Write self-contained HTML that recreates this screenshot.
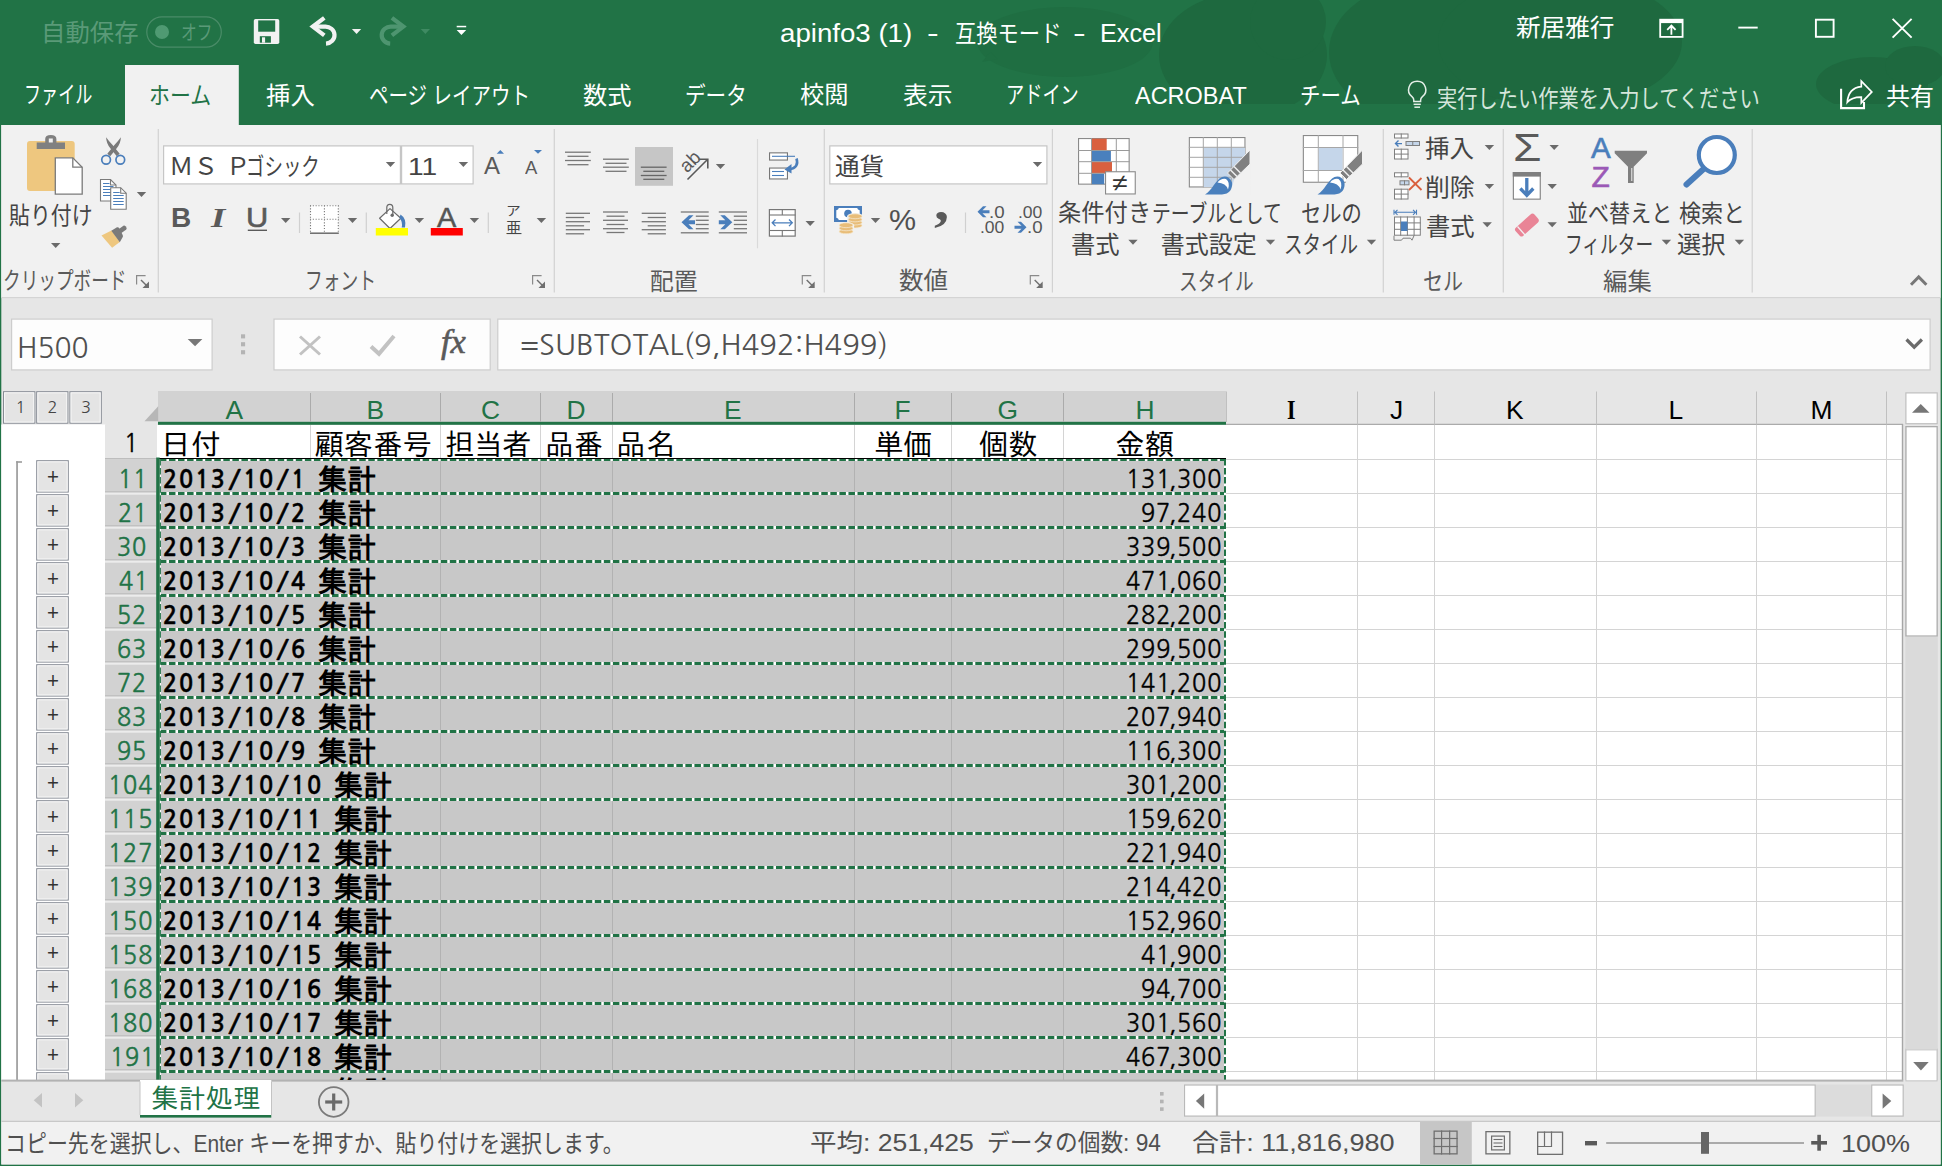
<!DOCTYPE html>
<html lang="ja"><head><meta charset="utf-8"><title>apinfo3 (1) - 互換モード - Excel</title>
<style>
html,body{margin:0;padding:0;background:#e6e6e6;}
#app{position:relative;width:1942px;height:1166px;overflow:hidden;background:#e6e6e6;font-family:'Liberation Sans','Noto Sans CJK JP',sans-serif;}
.t{position:absolute;white-space:pre;line-height:1;transform-origin:0 0;}
#g{position:absolute;left:0;top:0;}
</style></head><body>
<div id="app">
<svg id="g" width="1942" height="1166" viewBox="0 0 1942 1166">
<rect x="0" y="0" width="1942" height="125" fill="#217346" />
<clipPath id="cp"><rect x="0" y="0" width="1942" height="104"/></clipPath>
<g clip-path="url(#cp)">
<g fill="#1f6e42">
<ellipse cx="1065" cy="42" rx="88" ry="35"/><path d="M990 52l-8 10 16-3z"/>
</g>
<g fill="#1e693f">
<ellipse cx="1243" cy="55" rx="84" ry="62"/><circle cx="1288" cy="22" r="38"/><ellipse cx="1425" cy="52" rx="96" ry="70"/><ellipse cx="1560" cy="42" rx="122" ry="66"/><ellipse cx="1872" cy="84" rx="56" ry="27"/><ellipse cx="1915" cy="66" rx="30" ry="20"/>
</g>
</g>
<rect x="0" y="125" width="1.3" height="1041" fill="#217346" />
<rect x="1940.6" y="125" width="1.4" height="1041" fill="#217346" />
<rect x="0" y="1164.4" width="1942" height="1.6" fill="#217346" />
<rect x="146.8" y="16.8" width="74.5" height="30.4" rx="15.2" fill="none" stroke="#4a8c68" stroke-width="1.2"/>
<circle cx="162" cy="32" r="7" fill="#4f9a72"/>
<rect x="253.800" y="18.900" width="25.500" height="25.200" rx="1.800" fill="#f2f2f2"/>
<rect x="258.2" y="20.4" width="17" height="11.3" fill="#217346" />
<rect x="259.8" y="36.2" width="11.1" height="6.5" fill="#217346" />
<rect x="262" y="37.3" width="3.1" height="5.4" fill="#f2f2f2" />
<path d="M324.300 17.800L312.800 26.600L324.300 35.400" fill="none" stroke="#f2f2f2" stroke-width="4.2" stroke-linejoin="miter" stroke-miterlimit="8"/>
<path d="M313.500 26.600H325A9 8.500 0 0 1 326 43.600" fill="none" stroke="#f2f2f2" stroke-width="4.2" />
<path d="M351.9 29h9.3l-4.65 5z" fill="#f2f2f2"  />
<path d="M391.900 17.800L403.400 26.600L391.900 35.400" fill="none" stroke="#4e9570" stroke-width="4.2" stroke-linejoin="miter" stroke-miterlimit="8"/>
<path d="M402.700 26.600H391.200A9 8.500 0 0 0 390.200 43.600" fill="none" stroke="#4e9570" stroke-width="4.2" />
<path d="M420.7 29h9.3l-4.65 5z" fill="#3f8a62"  />
<rect x="456.7" y="25.8" width="9.5" height="1.5" fill="#fff" />
<path d="M456.7 30h9.5l-4.75 5z" fill="#fff"  />
<rect x="1660.200" y="19.700" width="22.400" height="17.200" fill="none" stroke="#fff" stroke-width="1.800"/>
<rect x="1660" y="19.5" width="22.8" height="3.6" fill="#fff" />
<path d="M1671.400 34.800v-8.800 M1667.200 29.800l4.200-4.200 4.200 4.200" fill="none" stroke="#fff" stroke-width="1.8" />
<line x1="1738.3" y1="27.6" x2="1757.7" y2="27.6" stroke="#fff" stroke-width="1.9" />
<rect x="1815.900" y="19.700" width="17.700" height="17.100" fill="none" stroke="#fff" stroke-width="1.900"/>
<path d="M1892.600 18.900l19 18.700 M1911.600 18.900l-19 18.700" fill="none" stroke="#fff" stroke-width="1.9" />
<rect x="125" y="65" width="113.8" height="60" fill="#f1f1f1" />
<path d="M1417.2 81.3a8.6 8.6 0 0 0 -5 15.6c1 .8 1.6 2 1.6 3.4v1.2h6.8v-1.2c0-1.4.6-2.6 1.6-3.4a8.6 8.6 0 0 0 -5-15.6z" fill="none" stroke="#e4efe8" stroke-width="1.5" />
<line x1="1413.6" y1="104.3" x2="1420.8" y2="104.3" stroke="#e4efe8" stroke-width="1.5" />
<line x1="1414.4" y1="107.2" x2="1420" y2="107.2" stroke="#e4efe8" stroke-width="1.5" />
<path d="M1847.300 102.300C1848 93 1853 87.500 1861.300 86.700L1861.300 81.200L1871.800 91.900L1861.300 102.900L1861.300 97.100C1855 97 1850.500 98.500 1847.300 102.300Z" fill="none" stroke="#fff" stroke-width="1.7" stroke-linejoin="miter"/>
<path d="M1841.100 88.700V108.100H1864V102" fill="none" stroke="#fff" stroke-width="2.1" />
<rect x="1.3" y="125" width="1939.3" height="172.5" fill="#f1f1f1" />
<rect x="1.3" y="297" width="1939.3" height="1.2" fill="#d4d4d4" />
<line x1="158.3" y1="129" x2="158.3" y2="292.5" stroke="#d2d2d2" stroke-width="1.2" />
<line x1="554.3" y1="129" x2="554.3" y2="292.5" stroke="#d2d2d2" stroke-width="1.2" />
<line x1="824.3" y1="129" x2="824.3" y2="292.5" stroke="#d2d2d2" stroke-width="1.2" />
<line x1="1052.4" y1="129" x2="1052.4" y2="292.5" stroke="#d2d2d2" stroke-width="1.2" />
<line x1="1383.3" y1="129" x2="1383.3" y2="292.5" stroke="#d2d2d2" stroke-width="1.2" />
<line x1="1503.3" y1="129" x2="1503.3" y2="292.5" stroke="#d2d2d2" stroke-width="1.2" />
<line x1="1752.2" y1="129" x2="1752.2" y2="292.5" stroke="#d2d2d2" stroke-width="1.2" />
<rect x="27" y="141" width="47.7" height="50" rx="3" fill="#eec77f"/>
<path d="M36.7 149v-6.5h8.5v-3.5q0-4 5.6-4t5.600 4v3.5h8.600v6.500z" fill="#808080"  />
<rect x="48.8" y="138.5" width="4" height="4" fill="#f1f1f1" />
<path d="M55.3 157.8h17.500l9.400 9.400v27h-26.900z" fill="#fff" stroke="#7a7a7a" stroke-width="1.3" />
<path d="M72.800 157.800v9.400h9.400" fill="none" stroke="#7a7a7a" stroke-width="1.3" />
<path d="M51 243h9.4l-4.7 5z" fill="#6a6a6a"  />
<path d="M106.100 137.300Q106.300 143.500 110.300 148.300L116.800 156.200L119.700 153.800L112.800 145.300Q108.300 140.500 106.100 137.300z" fill="#7a7a7a"  />
<path d="M120.900 137.300Q120.700 143.500 116.700 148.300L110.200 156.200L107.300 153.800L114.200 145.300Q118.700 140.500 120.900 137.300z" fill="#7a7a7a"  />
<circle cx="106.100" cy="159.800" r="4.350" fill="none" stroke="#4a7ebb" stroke-width="1.700"/><circle cx="120.300" cy="159.800" r="4.350" fill="none" stroke="#4a7ebb" stroke-width="1.700"/>
<path d="M100.5 179.5h10l5.500 5.500v16h-15.500z" fill="#fff" stroke="#7a7a7a" stroke-width="1.1" />
<path d="M110.5 179.5v5.500h5.500" fill="none" stroke="#7a7a7a" stroke-width="1.1" />
<line x1="103.0" y1="183.5" x2="109.5" y2="183.5" stroke="#4a7ebb" stroke-width="1.0" />
<line x1="103.0" y1="186.5" x2="113.5" y2="186.5" stroke="#4a7ebb" stroke-width="1.0" />
<line x1="103.0" y1="189.5" x2="113.5" y2="189.5" stroke="#4a7ebb" stroke-width="1.0" />
<line x1="103.0" y1="192.5" x2="113.5" y2="192.5" stroke="#4a7ebb" stroke-width="1.0" />
<line x1="103.0" y1="195.5" x2="113.5" y2="195.5" stroke="#4a7ebb" stroke-width="1.0" />
<path d="M110.7 187.7h10l5.500 5.500v16h-15.500z" fill="#fff" stroke="#7a7a7a" stroke-width="1.1" />
<path d="M120.7 187.7v5.500h5.500" fill="none" stroke="#7a7a7a" stroke-width="1.1" />
<line x1="113.2" y1="192.5" x2="119.7" y2="192.5" stroke="#4a7ebb" stroke-width="1.0" />
<line x1="113.2" y1="195.5" x2="123.7" y2="195.5" stroke="#4a7ebb" stroke-width="1.0" />
<line x1="113.2" y1="198.5" x2="123.7" y2="198.5" stroke="#4a7ebb" stroke-width="1.0" />
<line x1="113.2" y1="201.5" x2="123.7" y2="201.5" stroke="#4a7ebb" stroke-width="1.0" />
<line x1="113.2" y1="204.5" x2="123.7" y2="204.5" stroke="#4a7ebb" stroke-width="1.0" />
<path d="M136.8 192h9.4l-4.7 5z" fill="#6a6a6a"  />
<path d="M101.500 235.500L111.500 230.600L119.800 242.100L112.100 247.800z" fill="#eec77f"  />
<path d="M111.300 230.800L117 227.300Q118.300 226.800 119.300 228.300L122.800 235.300Q123.300 236.800 122.300 237.800L119.800 242.300z" fill="#7a7a7a"  />
<path d="M118.300 229.600L123.400 225.700Q124.600 225.200 125.500 226.300L126.500 227.700Q127 228.900 126 229.800L121 233.300z" fill="#7a7a7a"  />
<path d="M136.6 284.6v-9h9" fill="none" stroke="#8a8a8a" stroke-width="1.2" />
<path d="M141 280l6.5 6.5" fill="none" stroke="#6f6f6f" stroke-width="1.4" />
<path d="M149 288v-6.5l-6.5 6.5z" fill="#6f6f6f"  />
<rect x="163.6" y="145.9" width="236.8" height="38.0" fill="#fff" stroke="#c6c6c6" stroke-width="1.2" />
<rect x="401.6" y="145.9" width="71.5" height="38.0" fill="#fff" stroke="#c6c6c6" stroke-width="1.2" />
<path d="M385.8 162h9.4l-4.7 5z" fill="#6a6a6a"  />
<path d="M458.7 162h9.4l-4.7 5z" fill="#6a6a6a"  />
<path d="M496.700 153.800l3.650-3.800 3.650 3.800z" fill="#4a7ebb"  />
<path d="M534 150h8l-4 3.800z" fill="#4a7ebb"  />
<line x1="247.8" y1="230.3" x2="267" y2="230.3" stroke="#5a5a5a" stroke-width="1.4" />
<path d="M281 218h9.4l-4.7 5z" fill="#6a6a6a"  />
<line x1="299.5" y1="212.5" x2="299.5" y2="233" stroke="#d0d0d0" stroke-width="1.2" />
<rect x="310.5" y="205.5" width="28" height="27.5" fill="#fff" />
<line x1="310" y1="205.7" x2="338.8" y2="205.7" stroke="#7a7a7a" stroke-width="1.1" stroke-dasharray="1.1 1.7"/>
<line x1="310" y1="219.3" x2="338.8" y2="219.3" stroke="#7a7a7a" stroke-width="1.1" stroke-dasharray="1.1 1.7"/>
<line x1="310.5" y1="205.5" x2="310.5" y2="233" stroke="#7a7a7a" stroke-width="1.1" stroke-dasharray="1.1 1.7"/>
<line x1="324.4" y1="205.5" x2="324.4" y2="233" stroke="#7a7a7a" stroke-width="1.1" stroke-dasharray="1.1 1.7"/>
<line x1="338.3" y1="205.5" x2="338.3" y2="233" stroke="#7a7a7a" stroke-width="1.1" stroke-dasharray="1.1 1.7"/>
<line x1="310" y1="233.2" x2="338.8" y2="233.2" stroke="#6a6a6a" stroke-width="1.5" />
<path d="M347.8 218h9.4l-4.7 5z" fill="#6a6a6a"  />
<line x1="366.3" y1="212.5" x2="366.3" y2="233" stroke="#d0d0d0" stroke-width="1.2" />
<path d="M379.600 218.300L390 208.600L400.800 218.300L390 228.500z" fill="#fff" stroke="#6a6a6a" stroke-width="1.2" stroke-linejoin="round"/>
<path d="M386.800 214v-6.500a3 3.200 0 0 1 6 0v7" fill="none" stroke="#6a6a6a" stroke-width="1.2" />
<circle cx="392.200" cy="215.300" r="1.700" fill="#6a6a6a"/>
<path d="M400.500 214.500q6.300 4 4.500 13h-3.300q1.300-5.500-2.200-9.800z" fill="#4a7ebb"  />
<rect x="375.8" y="228" width="32.2" height="7.5" fill="#ffff00" />
<path d="M414.7 218h9.4l-4.7 5z" fill="#6a6a6a"  />
<rect x="430.8" y="228" width="32" height="7.5" fill="#ff0000" />
<path d="M469.7 218h9.4l-4.7 5z" fill="#6a6a6a"  />
<line x1="488.3" y1="212.5" x2="488.3" y2="233" stroke="#d0d0d0" stroke-width="1.2" />
<line x1="506.7" y1="233.6" x2="521.5" y2="233.6" stroke="#555" stroke-width="1" />
<path d="M536.7 218h9.4l-4.7 5z" fill="#6a6a6a"  />
<path d="M532.6 284.6v-9h9" fill="none" stroke="#8a8a8a" stroke-width="1.2" />
<path d="M537 280l6.5 6.5" fill="none" stroke="#6f6f6f" stroke-width="1.4" />
<path d="M545 288v-6.5l-6.5 6.5z" fill="#6f6f6f"  />
<line x1="565" y1="152.2" x2="590.8" y2="152.2" stroke="#777" stroke-width="1.3" />
<line x1="567.5" y1="156.3" x2="588.5" y2="156.3" stroke="#777" stroke-width="1.3" />
<line x1="565" y1="160.5" x2="590.8" y2="160.5" stroke="#777" stroke-width="1.3" />
<line x1="567.5" y1="164.7" x2="588.5" y2="164.7" stroke="#777" stroke-width="1.3" />
<line x1="603" y1="159.2" x2="628.8" y2="159.2" stroke="#777" stroke-width="1.3" />
<line x1="605.5" y1="163.3" x2="626.5" y2="163.3" stroke="#777" stroke-width="1.3" />
<line x1="603" y1="167.2" x2="628.8" y2="167.2" stroke="#777" stroke-width="1.3" />
<line x1="605.5" y1="171.3" x2="626.5" y2="171.3" stroke="#777" stroke-width="1.3" />
<rect x="635" y="147" width="38" height="38.8" fill="#c6c6c6" />
<line x1="640.8" y1="167.2" x2="666.5999999999999" y2="167.2" stroke="#666" stroke-width="1.3" />
<line x1="643.3" y1="171.3" x2="664.3" y2="171.3" stroke="#666" stroke-width="1.3" />
<line x1="640.8" y1="175.5" x2="666.5999999999999" y2="175.5" stroke="#666" stroke-width="1.3" />
<line x1="643.3" y1="179.3" x2="664.3" y2="179.3" stroke="#666" stroke-width="1.3" />
<text x="0" y="0" transform="translate(687 173.500) rotate(-45)" font-family="Liberation Sans, sans-serif" font-size="19" fill="#5a5a5a">ab</text>
<path d="M687.500 179.500l20-20 M698.500 159.300h9.300v9.300" fill="none" stroke="#5a5a5a" stroke-width="1.6" />
<path d="M715.8 164h9.4l-4.7 5z" fill="#6a6a6a"  />
<line x1="757.5" y1="139" x2="757.5" y2="248.3" stroke="#dadada" stroke-width="1.2" />
<rect x="769.55" y="152.85000000000002" width="17.9" height="7.200000000000001" fill="#fff" stroke="#777" stroke-width="1.1" />
<rect x="769.55" y="168.05" width="17.9" height="10.9" fill="#fff" stroke="#777" stroke-width="1.1" />
<line x1="772" y1="156.3" x2="795" y2="156.3" stroke="#4a7ebb" stroke-width="1.1" />
<line x1="772" y1="171.5" x2="784" y2="171.5" stroke="#4a7ebb" stroke-width="1.1" />
<line x1="772" y1="175.5" x2="784" y2="175.5" stroke="#4a7ebb" stroke-width="1.1" />
<path d="M796.500 158.500q3 9-7.500 11" fill="none" stroke="#4a7ebb" stroke-width="2.6" />
<path d="M784.500 169.500l7-5.500v9.500z" fill="#4a7ebb"  />
<line x1="565.8" y1="213.3" x2="590.0" y2="213.3" stroke="#777" stroke-width="1.3" />
<line x1="565.8" y1="217.5" x2="584.0999999999999" y2="217.5" stroke="#777" stroke-width="1.3" />
<line x1="565.8" y1="221.7" x2="590.0" y2="221.7" stroke="#777" stroke-width="1.3" />
<line x1="565.8" y1="225.8" x2="584.0999999999999" y2="225.8" stroke="#777" stroke-width="1.3" />
<line x1="565.8" y1="229.7" x2="590.0" y2="229.7" stroke="#777" stroke-width="1.3" />
<line x1="565.8" y1="233.8" x2="584.0999999999999" y2="233.8" stroke="#777" stroke-width="1.3" />
<line x1="603" y1="212" x2="628" y2="212" stroke="#777" stroke-width="1.3" />
<line x1="606.5" y1="216.2" x2="624.5" y2="216.2" stroke="#777" stroke-width="1.3" />
<line x1="603" y1="220.3" x2="628" y2="220.3" stroke="#777" stroke-width="1.3" />
<line x1="606.5" y1="224.5" x2="624.5" y2="224.5" stroke="#777" stroke-width="1.3" />
<line x1="603" y1="228.7" x2="628" y2="228.7" stroke="#777" stroke-width="1.3" />
<line x1="606.5" y1="232.5" x2="624.5" y2="232.5" stroke="#777" stroke-width="1.3" />
<line x1="641.7" y1="213.3" x2="665.9000000000001" y2="213.3" stroke="#777" stroke-width="1.3" />
<line x1="647.7" y1="217.5" x2="665.9000000000001" y2="217.5" stroke="#777" stroke-width="1.3" />
<line x1="641.7" y1="221.7" x2="665.9000000000001" y2="221.7" stroke="#777" stroke-width="1.3" />
<line x1="647.7" y1="225.8" x2="665.9000000000001" y2="225.8" stroke="#777" stroke-width="1.3" />
<line x1="641.7" y1="229.7" x2="665.9000000000001" y2="229.7" stroke="#777" stroke-width="1.3" />
<line x1="647.7" y1="233.8" x2="665.9000000000001" y2="233.8" stroke="#777" stroke-width="1.3" />
<line x1="680.8" y1="212" x2="708.6999999999999" y2="212" stroke="#777" stroke-width="1.3" />
<line x1="680.8" y1="232.8" x2="708.6999999999999" y2="232.8" stroke="#777" stroke-width="1.3" />
<line x1="695.8" y1="216.2" x2="708.6999999999999" y2="216.2" stroke="#777" stroke-width="1.3" />
<line x1="695.8" y1="220.3" x2="708.6999999999999" y2="220.3" stroke="#777" stroke-width="1.3" />
<line x1="695.8" y1="224.5" x2="708.6999999999999" y2="224.5" stroke="#777" stroke-width="1.3" />
<line x1="695.8" y1="228.7" x2="708.6999999999999" y2="228.7" stroke="#777" stroke-width="1.3" />
<path d="M681.500 222.200l7.500-7h4.500l-5 5h6.500v4h-6.500l5 5h-4.500z" fill="#4a7ebb"  />
<line x1="718.8" y1="212" x2="747.0" y2="212" stroke="#777" stroke-width="1.3" />
<line x1="718.8" y1="232.8" x2="747.0" y2="232.8" stroke="#777" stroke-width="1.3" />
<line x1="733.8" y1="216.2" x2="747.0" y2="216.2" stroke="#777" stroke-width="1.3" />
<line x1="733.8" y1="220.3" x2="747.0" y2="220.3" stroke="#777" stroke-width="1.3" />
<line x1="733.8" y1="224.5" x2="747.0" y2="224.5" stroke="#777" stroke-width="1.3" />
<line x1="733.8" y1="228.7" x2="747.0" y2="228.7" stroke="#777" stroke-width="1.3" />
<path d="M732.300 222.200l-7.500-7h-4.500l5 5h-6.500v4h6.500l-5 5h4.500z" fill="#4a7ebb"  />
<rect x="769.4" y="209.6" width="25.8" height="26.5" fill="#fff" stroke="#777" stroke-width="1.2" />
<line x1="769" y1="215" x2="795.5" y2="215" stroke="#777" stroke-width="1.1" />
<line x1="769" y1="230.5" x2="795.5" y2="230.5" stroke="#777" stroke-width="1.1" />
<line x1="782.3" y1="209.5" x2="782.3" y2="215" stroke="#777" stroke-width="1.1" />
<line x1="782.3" y1="230.5" x2="782.3" y2="236.5" stroke="#777" stroke-width="1.1" />
<path d="M772.500 222.800h19.500 M775.500 219.500l-3.300 3.300 3.300 3.300 M789 219.500l3.300 3.300-3.300 3.300" fill="none" stroke="#4a7ebb" stroke-width="1.3" />
<path d="M805.5 221h9.4l-4.7 5z" fill="#6a6a6a"  />
<path d="M802.3000000000001 284.6v-9h9" fill="none" stroke="#8a8a8a" stroke-width="1.2" />
<path d="M806.7 280l6.5 6.5" fill="none" stroke="#6f6f6f" stroke-width="1.4" />
<path d="M814.7 288v-6.5l-6.5 6.5z" fill="#6f6f6f"  />
<rect x="829.8000000000001" y="145.9" width="217.10000000000002" height="38.0" fill="#fff" stroke="#c6c6c6" stroke-width="1.2" />
<path d="M1032.8 162h9.4l-4.7 5z" fill="#6a6a6a"  />
<rect x="834" y="206" width="28" height="16" fill="#4a7ebb" />
<path d="M836.300 210.300q2.200-.3 2.500-2.300h18.400q.3 2 2.500 2.300v7.400q-2.200.3-2.500 2.300h-18.400q-.3-2-2.500-2.300z" fill="#fff"  />
<circle cx="848" cy="213.600" r="3.800" fill="#4a7ebb"/>
<ellipse cx="855.1" cy="216.3" rx="8" ry="3.200" fill="#f1f1f1"/>
<rect x="847.1" y="216.3" width="16" height="10.3" fill="#f1f1f1"/>
<ellipse cx="855.1" cy="225.60000000000002" rx="7" ry="2.450" fill="#e8bd79" stroke="#f6ecd8" stroke-width="0.700"/>
<ellipse cx="855.1" cy="222.5" rx="7" ry="2.450" fill="#e8bd79" stroke="#f6ecd8" stroke-width="0.700"/>
<ellipse cx="855.1" cy="219.4" rx="7" ry="2.450" fill="#e8bd79" stroke="#f6ecd8" stroke-width="0.700"/>
<ellipse cx="855.1" cy="216.3" rx="7" ry="2.450" fill="#e8bd79" stroke="#f6ecd8" stroke-width="0.700"/>
<ellipse cx="846.1" cy="225.2" rx="8" ry="3.200" fill="#f1f1f1"/>
<rect x="838.1" y="225.2" width="16" height="7.2" fill="#f1f1f1"/>
<ellipse cx="846.1" cy="231.39999999999998" rx="7" ry="2.450" fill="#e8bd79" stroke="#f6ecd8" stroke-width="0.700"/>
<ellipse cx="846.1" cy="228.29999999999998" rx="7" ry="2.450" fill="#e8bd79" stroke="#f6ecd8" stroke-width="0.700"/>
<ellipse cx="846.1" cy="225.2" rx="7" ry="2.450" fill="#e8bd79" stroke="#f6ecd8" stroke-width="0.700"/>
<path d="M870.8 218h9.4l-4.7 5z" fill="#6a6a6a"  />
<line x1="965.5" y1="212.5" x2="965.5" y2="233" stroke="#d0d0d0" stroke-width="1.2" />
<path d="M977.500 211.800l5.500-5.500h3.500l-4 4h7v3h-7l4 4h-3.500z" fill="#4a7ebb"  />
<path d="M1026.500 227.300l-5.500-5.500h-3.500l4 4h-7v3h7l-4 4h3.500z" fill="#4a7ebb"  />
<path d="M1030.3 284.6v-9h9" fill="none" stroke="#8a8a8a" stroke-width="1.2" />
<path d="M1034.7 280l6.5 6.5" fill="none" stroke="#6f6f6f" stroke-width="1.4" />
<path d="M1042.7 288v-6.5l-6.5 6.5z" fill="#6f6f6f"  />
<rect x="1078.55" y="138.55" width="50.6" height="45.6" fill="#fff" stroke="#8a8a8a" stroke-width="1.1" />
<rect x="1091.7" y="138.6" width="15" height="11.8" fill="#d9603f" />
<rect x="1091.7" y="150.8" width="19.2" height="10.8" fill="#4a80bd" />
<rect x="1091.7" y="162" width="20.3" height="11.2" fill="#d9603f" />
<rect x="1091.7" y="173.5" width="12.5" height="10.7" fill="#4a80bd" />
<line x1="1091.5" y1="138" x2="1091.5" y2="184.7" stroke="#9a9a9a" stroke-width="1" />
<line x1="1116.3" y1="138" x2="1116.3" y2="184.7" stroke="#9a9a9a" stroke-width="1" />
<line x1="1078" y1="150.5" x2="1129.7" y2="150.5" stroke="#9a9a9a" stroke-width="1" />
<line x1="1078" y1="161.7" x2="1129.7" y2="161.7" stroke="#9a9a9a" stroke-width="1" />
<line x1="1078" y1="173.3" x2="1129.7" y2="173.3" stroke="#9a9a9a" stroke-width="1" />
<rect x="1105.55" y="171.75" width="29.7" height="22.2" fill="#fff" stroke="#8a8a8a" stroke-width="1.1" />
<path d="M1128.3 239.8h9.4l-4.7 5z" fill="#6a6a6a"  />
<rect x="1189.35" y="137.55" width="55.6" height="49.4" fill="#fff" stroke="#8a8a8a" stroke-width="1.1" />
<rect x="1203.5" y="147.5" width="41.5" height="39.5" fill="#c5d6ea" />
<line x1="1203.3" y1="137" x2="1203.3" y2="187.5" stroke="#a6a6a6" stroke-width="1" />
<line x1="1217.3" y1="137" x2="1217.3" y2="187.5" stroke="#a6a6a6" stroke-width="1" />
<line x1="1231.3" y1="137" x2="1231.3" y2="187.5" stroke="#a6a6a6" stroke-width="1" />
<line x1="1188.8" y1="147.3" x2="1245.5" y2="147.3" stroke="#a6a6a6" stroke-width="1" />
<line x1="1188.8" y1="157.3" x2="1245.5" y2="157.3" stroke="#a6a6a6" stroke-width="1" />
<line x1="1188.8" y1="167.3" x2="1245.5" y2="167.3" stroke="#a6a6a6" stroke-width="1" />
<line x1="1188.8" y1="177.3" x2="1245.5" y2="177.3" stroke="#a6a6a6" stroke-width="1" />
<path d="M1250.6 163.5L1250.6 195.5L1222.0 195.5L1232.5 185.5L1234.0 179.5Z" fill="#f1f1f1"  />
<path d="M1227.5 173.0L1250.0 150.0L1250.0 164.0L1234.0 179.5Z" fill="#808080" stroke="#f1f1f1" stroke-width="1" />
<path d="M1230.5 170.0L1237.0 176.5" fill="none" stroke="#f1f1f1" stroke-width="1.4" />
<path d="M1234.0 166.5L1240.5 173.0" fill="none" stroke="#f1f1f1" stroke-width="1.4" />
<path d="M1205.0 194.5C1212.0 190.5 1215.0 180.5 1222.0 177.0Q1229.0 175.0 1232.0 182.5Q1233.0 193.5 1222.0 194.5Z" fill="#4a80bd"  />
<path d="M1217.5 182.5Q1221.0 178.0 1226.0 179.0Q1230.5 182.5 1228.0 189.5Q1226.0 183.0 1217.5 182.5Z" fill="#fff"  />
<path d="M1265.8 239.8h9.4l-4.7 5z" fill="#6a6a6a"  />
<rect x="1303.35" y="135.55" width="54.4" height="46.699999999999996" fill="#fff" stroke="#8a8a8a" stroke-width="1.1" />
<line x1="1318.3" y1="135" x2="1318.3" y2="182.8" stroke="#a6a6a6" stroke-width="1" />
<line x1="1343" y1="135" x2="1343" y2="182.8" stroke="#a6a6a6" stroke-width="1" />
<line x1="1302.8" y1="147.5" x2="1358.3" y2="147.5" stroke="#a6a6a6" stroke-width="1" />
<line x1="1302.8" y1="170.5" x2="1358.3" y2="170.5" stroke="#a6a6a6" stroke-width="1" />
<rect x="1318.8" y="148" width="23.7" height="22" fill="#c5d6ea" />
<path d="M1363.1 163.5L1363.1 195.5L1334.5 195.5L1345.0 185.5L1346.5 179.5Z" fill="#f1f1f1"  />
<path d="M1340.0 173.0L1362.5 150.0L1362.5 164.0L1346.5 179.5Z" fill="#808080" stroke="#f1f1f1" stroke-width="1" />
<path d="M1343.0 170.0L1349.5 176.5" fill="none" stroke="#f1f1f1" stroke-width="1.4" />
<path d="M1346.5 166.5L1353.0 173.0" fill="none" stroke="#f1f1f1" stroke-width="1.4" />
<path d="M1317.5 194.5C1324.5 190.5 1327.5 180.5 1334.5 177.0Q1341.5 175.0 1344.5 182.5Q1345.5 193.5 1334.5 194.5Z" fill="#4a80bd"  />
<path d="M1330.0 182.5Q1333.5 178.0 1338.5 179.0Q1343.0 182.5 1340.5 189.5Q1338.5 183.0 1330.0 182.5Z" fill="#fff"  />
<path d="M1366.8 239.8h9.4l-4.7 5z" fill="#6a6a6a"  />
<rect x="1394.5" y="134.0" width="13.5" height="4" fill="#fff" stroke="#7f7f7f" stroke-width="1" />
<line x1="1401.25" y1="133.5" x2="1401.25" y2="138.5" stroke="#7f7f7f" stroke-width="1" />
<rect x="1394.5" y="149.2" width="13.5" height="9.8" fill="#fff" stroke="#7f7f7f" stroke-width="1" />
<line x1="1401.25" y1="148.7" x2="1401.25" y2="159.5" stroke="#7f7f7f" stroke-width="1" />
<line x1="1394" y1="154.1" x2="1408.5" y2="154.1" stroke="#7f7f7f" stroke-width="1" />
<rect x="1406.0" y="141.5" width="13.5" height="4" fill="#c5d6ea" stroke="#7f7f7f" stroke-width="1" />
<line x1="1412.75" y1="141" x2="1412.75" y2="146" stroke="#7f7f7f" stroke-width="1" />
<path d="M1402 143.600h-6.500 M1398.500 140.600l-3 3 3 3" fill="none" stroke="#4a7ebb" stroke-width="1.4" />
<path d="M1484.7 145h9.4l-4.7 5z" fill="#6a6a6a"  />
<rect x="1394.5" y="172.8" width="13.5" height="4" fill="#fff" stroke="#7f7f7f" stroke-width="1" />
<line x1="1401.25" y1="172.3" x2="1401.25" y2="177.3" stroke="#7f7f7f" stroke-width="1" />
<rect x="1394.5" y="189.2" width="13.5" height="9.8" fill="#fff" stroke="#7f7f7f" stroke-width="1" />
<line x1="1401.25" y1="188.7" x2="1401.25" y2="199.5" stroke="#7f7f7f" stroke-width="1" />
<line x1="1394" y1="194.1" x2="1408.5" y2="194.1" stroke="#7f7f7f" stroke-width="1" />
<rect x="1400.0" y="180.8" width="9" height="4" fill="#c5d6ea" stroke="#7f7f7f" stroke-width="1" />
<line x1="1404.5" y1="180.3" x2="1404.5" y2="185.3" stroke="#7f7f7f" stroke-width="1" />
<path d="M1409 177.500l12.500 12.500 M1421.500 178l-12.500 12" fill="none" stroke="#d9603f" stroke-width="1.8" />
<path d="M1484.7 184h9.4l-4.7 5z" fill="#6a6a6a"  />
<path d="M1394 212.300h22.500 M1394 209.800v5 M1416.500 209.800v5 M1397.500 209.800l-2.500 2.500 2.500 2.500 M1413 209.800l2.500 2.500-2.500 2.500" fill="none" stroke="#4a7ebb" stroke-width="1.1" />
<rect x="1394.5" y="217.0" width="25.8" height="18.2" fill="#fff" stroke="#7f7f7f" stroke-width="1" />
<line x1="1400.7" y1="216.5" x2="1400.7" y2="235.7" stroke="#7f7f7f" stroke-width="1" />
<line x1="1407.4" y1="216.5" x2="1407.4" y2="235.7" stroke="#7f7f7f" stroke-width="1" />
<line x1="1414.1" y1="216.5" x2="1414.1" y2="235.7" stroke="#7f7f7f" stroke-width="1" />
<line x1="1394" y1="222.9" x2="1420.8" y2="222.9" stroke="#7f7f7f" stroke-width="1" />
<line x1="1394" y1="229.3" x2="1420.8" y2="229.3" stroke="#7f7f7f" stroke-width="1" />
<rect x="1401" y="221.5" width="6.5" height="9.5" fill="#4a7ebb" />
<path d="M1394 235.700v4.500h7.500l1.500-2h7.500l1.500 2h0l2-4.500" fill="none" stroke="#7f7f7f" stroke-width="1" />
<path d="M1482.5 222.2h9.4l-4.7 5z" fill="#6a6a6a"  />
<path d="M1549.5 145h9.4l-4.7 5z" fill="#6a6a6a"  />
<rect x="1513.35" y="172.55" width="26.9" height="26.599999999999998" fill="#fff" stroke="#7f7f7f" stroke-width="1.1" />
<rect x="1512.8" y="172" width="28" height="4.6" fill="#7f7f7f" />
<path d="M1526.800 178v17 M1520.300 188.500l6.500 6.800 6.500-6.800" fill="none" stroke="#4a7ebb" stroke-width="3.3" />
<path d="M1547.5 184h9.4l-4.7 5z" fill="#6a6a6a"  />
<path d="M1515.500 228l15-13.500q2-1.800 4 0l3.500 4q1.800 2 0 4l-15 13.500q-1.500 1.200-3 0l-4.500-5q-1.200-1.500 0-3z" fill="#e98496"  />
<path d="M1517.500 226.500l7.500 8.500" fill="none" stroke="#f1f1f1" stroke-width="1.2" />
<path d="M1547.5 222.2h9.4l-4.7 5z" fill="#6a6a6a"  />
<path d="M1614.700 150.800h32.300v2.500l-13.300 13.500v16.200h-5.700v-16.200l-13.300-13.500z" fill="#7f7f7f"  />
<line x1="1631.8" y1="168" x2="1631.8" y2="181" stroke="#f1f1f1" stroke-width="1" />
<path d="M1661.7 239.8h9.4l-4.7 5z" fill="#6a6a6a"  />
<circle cx="1716.800" cy="155" r="18" fill="#fff" stroke="#4a7ebb" stroke-width="4.200"/>
<path d="M1703 169.500l-16.500 15" fill="none" stroke="#4a7ebb" stroke-width="6" stroke-linecap="round"/>
<path d="M1734.7 239.8h9.4l-4.7 5z" fill="#6a6a6a"  />
<path d="M1911 284.800l7.700-7.800 7.700 7.800" fill="none" stroke="#777" stroke-width="3" />
<rect x="11.6" y="319.1" width="200.5" height="50.8" fill="#fdfdfd" stroke="#cdcdcd" stroke-width="1.2" />
<path d="M187.700 339h14.700l-7.350 7.300z" fill="#777"  />
<rect x="241" y="334.3" width="4.1" height="4.1" fill="#b4b4b4" />
<rect x="241" y="342.2" width="4.1" height="4.1" fill="#b4b4b4" />
<rect x="241" y="350.2" width="4.1" height="4.1" fill="#b4b4b4" />
<rect x="274.0" y="319.1" width="216.20000000000002" height="50.8" fill="#fdfdfd" stroke="#cdcdcd" stroke-width="1.2" />
<path d="M300 336.500l20 18 M320 336.500l-20 18" fill="none" stroke="#c2c2c2" stroke-width="3.0" />
<path d="M371 346.500l8 7.300 15-17.800" fill="none" stroke="#c2c2c2" stroke-width="4.0" />
<rect x="497.8" y="319.1" width="1432.3" height="50.8" fill="#fdfdfd" stroke="#cdcdcd" stroke-width="1.2" />
<path d="M1906.500 339.500l7.700 7.700 7.700-7.700" fill="none" stroke="#6a6a6a" stroke-width="3.2" />
<rect x="1.3" y="424.5" width="104" height="655.5" fill="#fff" />
<rect x="3.55" y="391.75" width="31.299999999999997" height="31.4" fill="#e4e4e4" stroke="#868b94" stroke-width="1.1" />
<rect x="4.6" y="392.8" width="29.2" height="29.3" fill="none" stroke="#f8f8f8" stroke-width="1" />
<rect x="36.75" y="391.75" width="31.1" height="31.4" fill="#e4e4e4" stroke="#868b94" stroke-width="1.1" />
<rect x="37.800000000000004" y="392.8" width="29.000000000000004" height="29.3" fill="none" stroke="#f8f8f8" stroke-width="1" />
<rect x="69.95" y="391.75" width="31.29999999999999" height="31.4" fill="#e4e4e4" stroke="#868b94" stroke-width="1.1" />
<rect x="71.0" y="392.8" width="29.199999999999992" height="29.3" fill="none" stroke="#f8f8f8" stroke-width="1" />
<rect x="16.2" y="461.2" width="1.7" height="620" fill="#9c9c9c" />
<rect x="16.2" y="461.2" width="5.8" height="1.6" fill="#9c9c9c" />
<rect x="105" y="425" width="1798" height="655" fill="#fff" />
<rect x="158" y="391" width="1068" height="31" fill="#d2d2d2" />
<rect x="158" y="421.8" width="1068" height="3" fill="#217346" />
<line x1="1226" y1="424.3" x2="1903" y2="424.3" stroke="#ababab" stroke-width="1.2" />
<path d="M144.500 421.200h13.700v-15z" fill="#b7b7b7"  />
<line x1="310.5" y1="393" x2="310.5" y2="422" stroke="#ababab" stroke-width="1" />
<line x1="440.5" y1="393" x2="440.5" y2="422" stroke="#ababab" stroke-width="1" />
<line x1="540.5" y1="393" x2="540.5" y2="422" stroke="#ababab" stroke-width="1" />
<line x1="612.5" y1="393" x2="612.5" y2="422" stroke="#ababab" stroke-width="1" />
<line x1="854.5" y1="393" x2="854.5" y2="422" stroke="#ababab" stroke-width="1" />
<line x1="951.5" y1="393" x2="951.5" y2="422" stroke="#ababab" stroke-width="1" />
<line x1="1063.5" y1="393" x2="1063.5" y2="422" stroke="#ababab" stroke-width="1" />
<line x1="1357.5" y1="391.5" x2="1357.5" y2="424.5" stroke="#c0c0c0" stroke-width="1" />
<line x1="1434.5" y1="391.5" x2="1434.5" y2="424.5" stroke="#c0c0c0" stroke-width="1" />
<line x1="1596.5" y1="391.5" x2="1596.5" y2="424.5" stroke="#c0c0c0" stroke-width="1" />
<line x1="1756.5" y1="391.5" x2="1756.5" y2="424.5" stroke="#c0c0c0" stroke-width="1" />
<line x1="1886.5" y1="391.5" x2="1886.5" y2="424.5" stroke="#c0c0c0" stroke-width="1" />
<line x1="1226.5" y1="391.5" x2="1226.5" y2="422" stroke="#c0c0c0" stroke-width="1" />
<rect x="105" y="425" width="52" height="33.5" fill="#e6e6e6" />
<line x1="105" y1="458.5" x2="157" y2="458.5" stroke="#bdbdbd" stroke-width="1" />
<rect x="105" y="459" width="52" height="621" fill="#d2d2d2" />
<rect x="158" y="459" width="1066.2" height="621" fill="#c8c8c8" />
<line x1="310.5" y1="425" x2="310.5" y2="459" stroke="#d4d4d4" stroke-width="1" />
<line x1="440.5" y1="425" x2="440.5" y2="459" stroke="#d4d4d4" stroke-width="1" />
<line x1="440.5" y1="459" x2="440.5" y2="1080" stroke="#b2b2b2" stroke-width="1" />
<line x1="540.5" y1="425" x2="540.5" y2="459" stroke="#d4d4d4" stroke-width="1" />
<line x1="540.5" y1="459" x2="540.5" y2="1080" stroke="#b2b2b2" stroke-width="1" />
<line x1="612.5" y1="425" x2="612.5" y2="459" stroke="#d4d4d4" stroke-width="1" />
<line x1="612.5" y1="459" x2="612.5" y2="1080" stroke="#b2b2b2" stroke-width="1" />
<line x1="854.5" y1="425" x2="854.5" y2="459" stroke="#d4d4d4" stroke-width="1" />
<line x1="854.5" y1="459" x2="854.5" y2="1080" stroke="#b2b2b2" stroke-width="1" />
<line x1="951.5" y1="425" x2="951.5" y2="459" stroke="#d4d4d4" stroke-width="1" />
<line x1="951.5" y1="459" x2="951.5" y2="1080" stroke="#b2b2b2" stroke-width="1" />
<line x1="1063.5" y1="425" x2="1063.5" y2="459" stroke="#d4d4d4" stroke-width="1" />
<line x1="1063.5" y1="459" x2="1063.5" y2="1080" stroke="#b2b2b2" stroke-width="1" />
<line x1="1357.5" y1="425" x2="1357.5" y2="1080" stroke="#d4d4d4" stroke-width="1" />
<line x1="1434.5" y1="425" x2="1434.5" y2="1080" stroke="#d4d4d4" stroke-width="1" />
<line x1="1596.5" y1="425" x2="1596.5" y2="1080" stroke="#d4d4d4" stroke-width="1" />
<line x1="1756.5" y1="425" x2="1756.5" y2="1080" stroke="#d4d4d4" stroke-width="1" />
<line x1="1886.5" y1="425" x2="1886.5" y2="1080" stroke="#d4d4d4" stroke-width="1" />
<line x1="1226" y1="459.5" x2="1903" y2="459.5" stroke="#d4d4d4" stroke-width="1" />
<line x1="1226" y1="493.5" x2="1903" y2="493.5" stroke="#d4d4d4" stroke-width="1" />
<line x1="1226" y1="527.5" x2="1903" y2="527.5" stroke="#d4d4d4" stroke-width="1" />
<line x1="1226" y1="561.5" x2="1903" y2="561.5" stroke="#d4d4d4" stroke-width="1" />
<line x1="1226" y1="595.5" x2="1903" y2="595.5" stroke="#d4d4d4" stroke-width="1" />
<line x1="1226" y1="629.5" x2="1903" y2="629.5" stroke="#d4d4d4" stroke-width="1" />
<line x1="1226" y1="663.5" x2="1903" y2="663.5" stroke="#d4d4d4" stroke-width="1" />
<line x1="1226" y1="697.5" x2="1903" y2="697.5" stroke="#d4d4d4" stroke-width="1" />
<line x1="1226" y1="731.5" x2="1903" y2="731.5" stroke="#d4d4d4" stroke-width="1" />
<line x1="1226" y1="765.5" x2="1903" y2="765.5" stroke="#d4d4d4" stroke-width="1" />
<line x1="1226" y1="799.5" x2="1903" y2="799.5" stroke="#d4d4d4" stroke-width="1" />
<line x1="1226" y1="833.5" x2="1903" y2="833.5" stroke="#d4d4d4" stroke-width="1" />
<line x1="1226" y1="867.5" x2="1903" y2="867.5" stroke="#d4d4d4" stroke-width="1" />
<line x1="1226" y1="901.5" x2="1903" y2="901.5" stroke="#d4d4d4" stroke-width="1" />
<line x1="1226" y1="935.5" x2="1903" y2="935.5" stroke="#d4d4d4" stroke-width="1" />
<line x1="1226" y1="969.5" x2="1903" y2="969.5" stroke="#d4d4d4" stroke-width="1" />
<line x1="1226" y1="1003.5" x2="1903" y2="1003.5" stroke="#d4d4d4" stroke-width="1" />
<line x1="1226" y1="1037.5" x2="1903" y2="1037.5" stroke="#d4d4d4" stroke-width="1" />
<line x1="1226" y1="1071.5" x2="1903" y2="1071.5" stroke="#d4d4d4" stroke-width="1" />
<line x1="1902.5" y1="424" x2="1902.5" y2="1080" stroke="#a6a6a6" stroke-width="1.4" />
<line x1="158" y1="458.5" x2="1226" y2="458.5" stroke="#000" stroke-width="1.2" />
<rect x="36.75" y="460.75" width="31.5" height="31.299999999999997" fill="#e4e4e4" stroke="#868b94" stroke-width="1.1" />
<rect x="37.8" y="461.8" width="29.4" height="29.2" fill="none" stroke="#f8f8f8" stroke-width="1" />
<rect x="105" y="491.5" width="51.5" height="1" fill="#b0b0b0" />
<rect x="105" y="492.5" width="51.5" height="2.2" fill="#ececec" />
<rect x="36.75" y="494.75" width="31.5" height="31.299999999999997" fill="#e4e4e4" stroke="#868b94" stroke-width="1.1" />
<rect x="37.8" y="495.8" width="29.4" height="29.2" fill="none" stroke="#f8f8f8" stroke-width="1" />
<rect x="105" y="525.5" width="51.5" height="1" fill="#b0b0b0" />
<rect x="105" y="526.5" width="51.5" height="2.2" fill="#ececec" />
<rect x="36.75" y="528.75" width="31.5" height="31.299999999999997" fill="#e4e4e4" stroke="#868b94" stroke-width="1.1" />
<rect x="37.8" y="529.8000000000001" width="29.4" height="29.2" fill="none" stroke="#f8f8f8" stroke-width="1" />
<rect x="105" y="559.5" width="51.5" height="1" fill="#b0b0b0" />
<rect x="105" y="560.5" width="51.5" height="2.2" fill="#ececec" />
<rect x="36.75" y="562.75" width="31.5" height="31.299999999999997" fill="#e4e4e4" stroke="#868b94" stroke-width="1.1" />
<rect x="37.8" y="563.8000000000001" width="29.4" height="29.2" fill="none" stroke="#f8f8f8" stroke-width="1" />
<rect x="105" y="593.5" width="51.5" height="1" fill="#b0b0b0" />
<rect x="105" y="594.5" width="51.5" height="2.2" fill="#ececec" />
<rect x="36.75" y="596.75" width="31.5" height="31.299999999999997" fill="#e4e4e4" stroke="#868b94" stroke-width="1.1" />
<rect x="37.8" y="597.8000000000001" width="29.4" height="29.2" fill="none" stroke="#f8f8f8" stroke-width="1" />
<rect x="105" y="627.5" width="51.5" height="1" fill="#b0b0b0" />
<rect x="105" y="628.5" width="51.5" height="2.2" fill="#ececec" />
<rect x="36.75" y="630.75" width="31.5" height="31.299999999999997" fill="#e4e4e4" stroke="#868b94" stroke-width="1.1" />
<rect x="37.8" y="631.8000000000001" width="29.4" height="29.2" fill="none" stroke="#f8f8f8" stroke-width="1" />
<rect x="105" y="661.5" width="51.5" height="1" fill="#b0b0b0" />
<rect x="105" y="662.5" width="51.5" height="2.2" fill="#ececec" />
<rect x="36.75" y="664.75" width="31.5" height="31.299999999999997" fill="#e4e4e4" stroke="#868b94" stroke-width="1.1" />
<rect x="37.8" y="665.8000000000001" width="29.4" height="29.2" fill="none" stroke="#f8f8f8" stroke-width="1" />
<rect x="105" y="695.5" width="51.5" height="1" fill="#b0b0b0" />
<rect x="105" y="696.5" width="51.5" height="2.2" fill="#ececec" />
<rect x="36.75" y="698.75" width="31.5" height="31.299999999999997" fill="#e4e4e4" stroke="#868b94" stroke-width="1.1" />
<rect x="37.8" y="699.8000000000001" width="29.4" height="29.2" fill="none" stroke="#f8f8f8" stroke-width="1" />
<rect x="105" y="729.5" width="51.5" height="1" fill="#b0b0b0" />
<rect x="105" y="730.5" width="51.5" height="2.2" fill="#ececec" />
<rect x="36.75" y="732.75" width="31.5" height="31.299999999999997" fill="#e4e4e4" stroke="#868b94" stroke-width="1.1" />
<rect x="37.8" y="733.8000000000001" width="29.4" height="29.2" fill="none" stroke="#f8f8f8" stroke-width="1" />
<rect x="105" y="763.5" width="51.5" height="1" fill="#b0b0b0" />
<rect x="105" y="764.5" width="51.5" height="2.2" fill="#ececec" />
<rect x="36.75" y="766.75" width="31.5" height="31.299999999999997" fill="#e4e4e4" stroke="#868b94" stroke-width="1.1" />
<rect x="37.8" y="767.8000000000001" width="29.4" height="29.2" fill="none" stroke="#f8f8f8" stroke-width="1" />
<rect x="105" y="797.5" width="51.5" height="1" fill="#b0b0b0" />
<rect x="105" y="798.5" width="51.5" height="2.2" fill="#ececec" />
<rect x="36.75" y="800.75" width="31.5" height="31.299999999999997" fill="#e4e4e4" stroke="#868b94" stroke-width="1.1" />
<rect x="37.8" y="801.8000000000001" width="29.4" height="29.2" fill="none" stroke="#f8f8f8" stroke-width="1" />
<rect x="105" y="831.5" width="51.5" height="1" fill="#b0b0b0" />
<rect x="105" y="832.5" width="51.5" height="2.2" fill="#ececec" />
<rect x="36.75" y="834.75" width="31.5" height="31.299999999999997" fill="#e4e4e4" stroke="#868b94" stroke-width="1.1" />
<rect x="37.8" y="835.8000000000001" width="29.4" height="29.2" fill="none" stroke="#f8f8f8" stroke-width="1" />
<rect x="105" y="865.5" width="51.5" height="1" fill="#b0b0b0" />
<rect x="105" y="866.5" width="51.5" height="2.2" fill="#ececec" />
<rect x="36.75" y="868.75" width="31.5" height="31.299999999999997" fill="#e4e4e4" stroke="#868b94" stroke-width="1.1" />
<rect x="37.8" y="869.8000000000001" width="29.4" height="29.2" fill="none" stroke="#f8f8f8" stroke-width="1" />
<rect x="105" y="899.5" width="51.5" height="1" fill="#b0b0b0" />
<rect x="105" y="900.5" width="51.5" height="2.2" fill="#ececec" />
<rect x="36.75" y="902.75" width="31.5" height="31.299999999999997" fill="#e4e4e4" stroke="#868b94" stroke-width="1.1" />
<rect x="37.8" y="903.8000000000001" width="29.4" height="29.2" fill="none" stroke="#f8f8f8" stroke-width="1" />
<rect x="105" y="933.5" width="51.5" height="1" fill="#b0b0b0" />
<rect x="105" y="934.5" width="51.5" height="2.2" fill="#ececec" />
<rect x="36.75" y="936.75" width="31.5" height="31.299999999999997" fill="#e4e4e4" stroke="#868b94" stroke-width="1.1" />
<rect x="37.8" y="937.8000000000001" width="29.4" height="29.2" fill="none" stroke="#f8f8f8" stroke-width="1" />
<rect x="105" y="967.5" width="51.5" height="1" fill="#b0b0b0" />
<rect x="105" y="968.5" width="51.5" height="2.2" fill="#ececec" />
<rect x="36.75" y="970.75" width="31.5" height="31.299999999999997" fill="#e4e4e4" stroke="#868b94" stroke-width="1.1" />
<rect x="37.8" y="971.8000000000001" width="29.4" height="29.2" fill="none" stroke="#f8f8f8" stroke-width="1" />
<rect x="105" y="1001.5" width="51.5" height="1" fill="#b0b0b0" />
<rect x="105" y="1002.5" width="51.5" height="2.2" fill="#ececec" />
<rect x="36.75" y="1004.75" width="31.5" height="31.299999999999997" fill="#e4e4e4" stroke="#868b94" stroke-width="1.1" />
<rect x="37.8" y="1005.8000000000001" width="29.4" height="29.2" fill="none" stroke="#f8f8f8" stroke-width="1" />
<rect x="105" y="1035.5" width="51.5" height="1" fill="#b0b0b0" />
<rect x="105" y="1036.5" width="51.5" height="2.2" fill="#ececec" />
<rect x="36.75" y="1038.75" width="31.5" height="31.299999999999997" fill="#e4e4e4" stroke="#868b94" stroke-width="1.1" />
<rect x="37.8" y="1039.8" width="29.4" height="29.2" fill="none" stroke="#f8f8f8" stroke-width="1" />
<rect x="105" y="1069.5" width="51.5" height="1" fill="#b0b0b0" />
<rect x="105" y="1070.5" width="51.5" height="2.2" fill="#ececec" />
<rect x="36.75" y="1072.75" width="31.5" height="31.299999999999997" fill="#e4e4e4" stroke="#868b94" stroke-width="1.1" />
<rect x="37.8" y="1073.8" width="29.4" height="29.2" fill="none" stroke="#f8f8f8" stroke-width="1" />
<line x1="159.9" y1="460.0" x2="1226" y2="460.0" stroke="#fff" stroke-width="2.0" />
<line x1="159.9" y1="460.0" x2="1226" y2="460.0" stroke="#217346" stroke-width="2.0" stroke-dasharray="6.500 2.560"/>
<line x1="159.9" y1="493.5" x2="1226" y2="493.5" stroke="#fff" stroke-width="3.0" />
<line x1="159.9" y1="493.5" x2="1226" y2="493.5" stroke="#217346" stroke-width="3.0" stroke-dasharray="6.500 2.560"/>
<line x1="159.9" y1="527.5" x2="1226" y2="527.5" stroke="#fff" stroke-width="3.0" />
<line x1="159.9" y1="527.5" x2="1226" y2="527.5" stroke="#217346" stroke-width="3.0" stroke-dasharray="6.500 2.560"/>
<line x1="159.9" y1="561.5" x2="1226" y2="561.5" stroke="#fff" stroke-width="3.0" />
<line x1="159.9" y1="561.5" x2="1226" y2="561.5" stroke="#217346" stroke-width="3.0" stroke-dasharray="6.500 2.560"/>
<line x1="159.9" y1="595.5" x2="1226" y2="595.5" stroke="#fff" stroke-width="3.0" />
<line x1="159.9" y1="595.5" x2="1226" y2="595.5" stroke="#217346" stroke-width="3.0" stroke-dasharray="6.500 2.560"/>
<line x1="159.9" y1="629.5" x2="1226" y2="629.5" stroke="#fff" stroke-width="3.0" />
<line x1="159.9" y1="629.5" x2="1226" y2="629.5" stroke="#217346" stroke-width="3.0" stroke-dasharray="6.500 2.560"/>
<line x1="159.9" y1="663.5" x2="1226" y2="663.5" stroke="#fff" stroke-width="3.0" />
<line x1="159.9" y1="663.5" x2="1226" y2="663.5" stroke="#217346" stroke-width="3.0" stroke-dasharray="6.500 2.560"/>
<line x1="159.9" y1="697.5" x2="1226" y2="697.5" stroke="#fff" stroke-width="3.0" />
<line x1="159.9" y1="697.5" x2="1226" y2="697.5" stroke="#217346" stroke-width="3.0" stroke-dasharray="6.500 2.560"/>
<line x1="159.9" y1="731.5" x2="1226" y2="731.5" stroke="#fff" stroke-width="3.0" />
<line x1="159.9" y1="731.5" x2="1226" y2="731.5" stroke="#217346" stroke-width="3.0" stroke-dasharray="6.500 2.560"/>
<line x1="159.9" y1="765.5" x2="1226" y2="765.5" stroke="#fff" stroke-width="3.0" />
<line x1="159.9" y1="765.5" x2="1226" y2="765.5" stroke="#217346" stroke-width="3.0" stroke-dasharray="6.500 2.560"/>
<line x1="159.9" y1="799.5" x2="1226" y2="799.5" stroke="#fff" stroke-width="3.0" />
<line x1="159.9" y1="799.5" x2="1226" y2="799.5" stroke="#217346" stroke-width="3.0" stroke-dasharray="6.500 2.560"/>
<line x1="159.9" y1="833.5" x2="1226" y2="833.5" stroke="#fff" stroke-width="3.0" />
<line x1="159.9" y1="833.5" x2="1226" y2="833.5" stroke="#217346" stroke-width="3.0" stroke-dasharray="6.500 2.560"/>
<line x1="159.9" y1="867.5" x2="1226" y2="867.5" stroke="#fff" stroke-width="3.0" />
<line x1="159.9" y1="867.5" x2="1226" y2="867.5" stroke="#217346" stroke-width="3.0" stroke-dasharray="6.500 2.560"/>
<line x1="159.9" y1="901.5" x2="1226" y2="901.5" stroke="#fff" stroke-width="3.0" />
<line x1="159.9" y1="901.5" x2="1226" y2="901.5" stroke="#217346" stroke-width="3.0" stroke-dasharray="6.500 2.560"/>
<line x1="159.9" y1="935.5" x2="1226" y2="935.5" stroke="#fff" stroke-width="3.0" />
<line x1="159.9" y1="935.5" x2="1226" y2="935.5" stroke="#217346" stroke-width="3.0" stroke-dasharray="6.500 2.560"/>
<line x1="159.9" y1="969.5" x2="1226" y2="969.5" stroke="#fff" stroke-width="3.0" />
<line x1="159.9" y1="969.5" x2="1226" y2="969.5" stroke="#217346" stroke-width="3.0" stroke-dasharray="6.500 2.560"/>
<line x1="159.9" y1="1003.5" x2="1226" y2="1003.5" stroke="#fff" stroke-width="3.0" />
<line x1="159.9" y1="1003.5" x2="1226" y2="1003.5" stroke="#217346" stroke-width="3.0" stroke-dasharray="6.500 2.560"/>
<line x1="159.9" y1="1037.5" x2="1226" y2="1037.5" stroke="#fff" stroke-width="3.0" />
<line x1="159.9" y1="1037.5" x2="1226" y2="1037.5" stroke="#217346" stroke-width="3.0" stroke-dasharray="6.500 2.560"/>
<line x1="159.9" y1="1071.5" x2="1226" y2="1071.5" stroke="#fff" stroke-width="3.0" />
<line x1="159.9" y1="1071.5" x2="1226" y2="1071.5" stroke="#217346" stroke-width="3.0" stroke-dasharray="6.500 2.560"/>
<line x1="1225.0" y1="459" x2="1225.0" y2="1080" stroke="#fff" stroke-width="2.0" />
<line x1="1225.0" y1="459" x2="1225.0" y2="1080" stroke="#217346" stroke-width="2.0" stroke-dasharray="6.500 2.560"/>
<line x1="160.3" y1="459" x2="160.3" y2="1080" stroke="#fff" stroke-width="1.2" />
<line x1="160.3" y1="459" x2="160.3" y2="1080" stroke="#217346" stroke-width="1.2" stroke-dasharray="6.500 2.560"/>
<rect x="156.2" y="457.5" width="3.5" height="623" fill="#217346" />
<rect x="1905.8999999999999" y="392.90000000000003" width="31.3" height="30.8" fill="#fff" stroke="#c0c0c0" stroke-width="1.2" />
<path d="M1912 412.800h17.500l-8.750-8.800z" fill="#777"  />
<rect x="1905.95" y="426.65" width="31.2" height="209.39999999999998" fill="#fff" stroke="#ababab" stroke-width="1.3" />
<rect x="1905.95" y="1048.55" width="31.299999999999997" height="30.9" fill="#fff" stroke="#c6c6c6" stroke-width="1.1" />
<path d="M1912 1060.500h17.500l-8.750 8.800z" fill="#777"  />
<rect x="1.3" y="1080" width="1939.3" height="41.5" fill="#e6e6e6" />
<rect x="1.3" y="1079.6" width="1902" height="2" fill="#b2b2b2" />
<path d="M42 1093v14.500l-8.300-7.250z" fill="#c3c3c3"  />
<path d="M75 1093v14.500l8.300-7.250z" fill="#c3c3c3"  />
<rect x="140" y="1080" width="131.3" height="36.5" fill="#fff" />
<rect x="140" y="1115" width="131.3" height="2.6" fill="#217346" />
<rect x="139.5" y="1081.5" width="1" height="33.5" fill="#c3c3c3" />
<rect x="271" y="1081.5" width="1" height="33.5" fill="#c3c3c3" />
<circle cx="333.700" cy="1102" r="14.800" fill="none" stroke="#7a7a7a" stroke-width="1.800"/>
<rect x="325.2" y="1100.4" width="17" height="3.2" fill="#6a6a6a" />
<rect x="332.1" y="1093.5" width="3.2" height="17" fill="#6a6a6a" />
<rect x="1160" y="1092" width="3.6" height="3.6" fill="#b4b4b4" />
<rect x="1160" y="1099.7" width="3.6" height="3.6" fill="#b4b4b4" />
<rect x="1160" y="1107.3" width="3.6" height="3.6" fill="#b4b4b4" />
<rect x="1184" y="1084.5" width="719.7" height="32.1" fill="#dcdcdc" />
<rect x="1184.55" y="1085.05" width="31.9" height="31.0" fill="#fff" stroke="#b9b9b9" stroke-width="1.1" />
<path d="M1204.200 1093.400v15.300l-8.300-7.650z" fill="#777"  />
<rect x="1217.55" y="1085.05" width="597.6" height="31.0" fill="#fff" stroke="#b9b9b9" stroke-width="1.1" />
<rect x="1871.75" y="1085.05" width="31.4" height="31.0" fill="#fff" stroke="#b9b9b9" stroke-width="1.1" />
<path d="M1882.600 1093.400v15.300l8.700-7.650z" fill="#777"  />
<rect x="1905.3" y="636.7" width="32.5" height="412.6" fill="#dadada" />
<rect x="1905.95" y="1049.85" width="31.1" height="31.0" fill="#fff" stroke="#c6c6c6" stroke-width="1.1" />
<path d="M1913.200 1062h15.500l-7.750 8.400z" fill="#777"  />
<rect x="1.3" y="1121" width="1939.3" height="43.5" fill="#f1f1f1" />
<line x1="1.3" y1="1121.3" x2="1940.6" y2="1121.3" stroke="#c8c8c8" stroke-width="1.2" />
<rect x="1420" y="1122" width="51.8" height="42.5" fill="#c6c6c6" />
<rect x="1434.15" y="1131.15" width="22.9" height="22.7" fill="none" stroke="#6f6f6f" stroke-width="1.3" />
<line x1="1441.57" y1="1130.5" x2="1441.57" y2="1154.5" stroke="#6f6f6f" stroke-width="1.2" />
<line x1="1433.5" y1="1138.5" x2="1457.7" y2="1138.5" stroke="#6f6f6f" stroke-width="1.2" />
<line x1="1449.64" y1="1130.5" x2="1449.64" y2="1154.5" stroke="#6f6f6f" stroke-width="1.2" />
<line x1="1433.5" y1="1146.5" x2="1457.7" y2="1146.5" stroke="#6f6f6f" stroke-width="1.2" />
<rect x="1485.95" y="1131.65" width="23.9" height="22.2" fill="none" stroke="#6f6f6f" stroke-width="1.3" />
<rect x="1491.6" y="1136.1" width="12.8" height="13.8" fill="none" stroke="#6f6f6f" stroke-width="1.2" />
<line x1="1493.5" y1="1139.5" x2="1502.5" y2="1139.5" stroke="#6f6f6f" stroke-width="1.1" />
<line x1="1493.5" y1="1143" x2="1502.5" y2="1143" stroke="#6f6f6f" stroke-width="1.1" />
<line x1="1493.5" y1="1146.5" x2="1502.5" y2="1146.5" stroke="#6f6f6f" stroke-width="1.1" />
<rect x="1537.65" y="1132.15" width="24.9" height="22.2" fill="none" stroke="#6f6f6f" stroke-width="1.3" />
<path d="M1537 1146.500h14.500v-15 M1544.500 1131.500v15" fill="none" stroke="#6f6f6f" stroke-width="1.2" />
<rect x="1585" y="1141" width="12" height="4.4" fill="#5a5a5a" />
<line x1="1606.2" y1="1142.9" x2="1804" y2="1142.9" stroke="#929292" stroke-width="1.5" />
<rect x="1701" y="1132" width="8" height="21.8" fill="#666" />
<rect x="1811.2" y="1141" width="15.8" height="3.6" fill="#5a5a5a" />
<rect x="1817.3" y="1134.8" width="3.6" height="15.9" fill="#5a5a5a" />
</svg>
<div style="position:absolute;left:0;top:0;width:1942px;height:1080px;overflow:hidden">
<span class="t" style="left:124.4px;top:432.0px;font-size:24.9px;color:#000;font-family:'NanumGothic','Liberation Sans',sans-serif;-webkit-text-stroke:0.4px #000;transform:scaleX(0.940);">1</span>
<span class="t" style="left:160.9px;top:429.5px;font-size:29.33px;color:#000;font-family:'IPAGothic','Noto Sans CJK JP',monospace;transform:scaleX(1.015);">日付</span>
<span class="t" style="left:314.5px;top:429.5px;font-size:29.33px;color:#000;font-family:'IPAGothic','Noto Sans CJK JP',monospace;">顧客番号</span>
<span class="t" style="left:444.5px;top:430.0px;font-size:29.33px;color:#000;font-family:'IPAGothic','Noto Sans CJK JP',monospace;transform:scaleX(0.982);">担当者</span>
<span class="t" style="left:544.5px;top:429.5px;font-size:29.33px;color:#000;font-family:'IPAGothic','Noto Sans CJK JP',monospace;transform:scaleX(0.991);">品番</span>
<span class="t" style="left:615.9px;top:429.5px;font-size:29.33px;color:#000;font-family:'IPAGothic','Noto Sans CJK JP',monospace;transform:scaleX(1.019);">品名</span>
<span class="t" style="left:874.0px;top:429.5px;font-size:29.33px;color:#000;font-family:'IPAGothic','Noto Sans CJK JP',monospace;">単価</span>
<span class="t" style="left:979.0px;top:429.5px;font-size:29.33px;color:#000;font-family:'IPAGothic','Noto Sans CJK JP',monospace;">個数</span>
<span class="t" style="left:1115.3px;top:429.5px;font-size:29.33px;color:#000;font-family:'IPAGothic','Noto Sans CJK JP',monospace;">金額</span>
<span class="t" style="left:117.5px;top:468.4px;font-size:24.9px;color:#217346;font-family:'NanumGothic','Liberation Sans',sans-serif;-webkit-text-stroke:0.5px #217346;letter-spacing:0.96px;transform:scaleX(0.940);">11</span>
<span class="t" style="left:46.7px;top:465.9px;font-size:21.2px;color:#333;transform:scaleX(0.964);">+</span>
<span class="t" style="left:163.0px;top:468.4px;font-size:24.9px;color:#000;font-family:'NanumGothic','Liberation Sans',sans-serif;font-weight:700;-webkit-text-stroke:0.4px #000;letter-spacing:1.88px;transform:scaleX(0.940);">2013</span>
<span class="t" style="left:227.8px;top:467.6px;font-size:24.9px;color:#000;font-family:'NanumGothic','Liberation Sans',sans-serif;-webkit-text-stroke:0.45px #000;transform:scaleX(1.360);">/</span>
<span class="t" style="left:242.8px;top:468.4px;font-size:24.9px;color:#000;font-family:'NanumGothic','Liberation Sans',sans-serif;font-weight:700;-webkit-text-stroke:0.4px #000;letter-spacing:1.88px;transform:scaleX(0.940);">10</span>
<span class="t" style="left:275.7px;top:467.6px;font-size:24.9px;color:#000;font-family:'NanumGothic','Liberation Sans',sans-serif;-webkit-text-stroke:0.45px #000;transform:scaleX(1.360);">/</span>
<span class="t" style="left:290.7px;top:468.4px;font-size:24.9px;color:#000;font-family:'NanumGothic','Liberation Sans',sans-serif;font-weight:700;-webkit-text-stroke:0.4px #000;letter-spacing:1.88px;transform:scaleX(0.940);">1</span>
<span class="t" style="left:317.5px;top:465.0px;font-size:29.33px;color:#000;font-family:'IPAGothic','Noto Sans CJK JP',monospace;font-weight:700;transform:scaleX(0.991);">集計</span>
<span class="t" style="left:1176.5px;top:468.4px;font-size:24.9px;color:#000;font-family:'NanumGothic','Liberation Sans',sans-serif;-webkit-text-stroke:0.4px #000;letter-spacing:0.96px;transform:scaleX(0.940);">300</span>
<span class="t" style="left:1168.9px;top:467.1px;font-size:24.9px;color:#000;font-family:'NanumGothic','Liberation Sans',sans-serif;-webkit-text-stroke:0.3px #000;">,</span>
<span class="t" style="left:1125.8px;top:468.4px;font-size:24.9px;color:#000;font-family:'NanumGothic','Liberation Sans',sans-serif;-webkit-text-stroke:0.4px #000;letter-spacing:0.96px;transform:scaleX(0.940);">131</span>
<span class="t" style="left:118.4px;top:502.4px;font-size:24.9px;color:#217346;font-family:'NanumGothic','Liberation Sans',sans-serif;-webkit-text-stroke:0.5px #217346;letter-spacing:0.96px;transform:scaleX(0.940);">21</span>
<span class="t" style="left:46.7px;top:499.9px;font-size:21.2px;color:#333;transform:scaleX(0.964);">+</span>
<span class="t" style="left:163.0px;top:502.4px;font-size:24.9px;color:#000;font-family:'NanumGothic','Liberation Sans',sans-serif;font-weight:700;-webkit-text-stroke:0.4px #000;letter-spacing:1.88px;transform:scaleX(0.940);">2013</span>
<span class="t" style="left:227.8px;top:501.6px;font-size:24.9px;color:#000;font-family:'NanumGothic','Liberation Sans',sans-serif;-webkit-text-stroke:0.45px #000;transform:scaleX(1.360);">/</span>
<span class="t" style="left:242.8px;top:502.4px;font-size:24.9px;color:#000;font-family:'NanumGothic','Liberation Sans',sans-serif;font-weight:700;-webkit-text-stroke:0.4px #000;letter-spacing:1.88px;transform:scaleX(0.940);">10</span>
<span class="t" style="left:275.7px;top:501.6px;font-size:24.9px;color:#000;font-family:'NanumGothic','Liberation Sans',sans-serif;-webkit-text-stroke:0.45px #000;transform:scaleX(1.360);">/</span>
<span class="t" style="left:290.7px;top:502.4px;font-size:24.9px;color:#000;font-family:'NanumGothic','Liberation Sans',sans-serif;font-weight:700;-webkit-text-stroke:0.4px #000;letter-spacing:1.88px;transform:scaleX(0.940);">2</span>
<span class="t" style="left:317.5px;top:499.0px;font-size:29.33px;color:#000;font-family:'IPAGothic','Noto Sans CJK JP',monospace;font-weight:700;transform:scaleX(0.991);">集計</span>
<span class="t" style="left:1176.5px;top:502.4px;font-size:24.9px;color:#000;font-family:'NanumGothic','Liberation Sans',sans-serif;-webkit-text-stroke:0.4px #000;letter-spacing:0.96px;transform:scaleX(0.940);">240</span>
<span class="t" style="left:1168.9px;top:501.1px;font-size:24.9px;color:#000;font-family:'NanumGothic','Liberation Sans',sans-serif;-webkit-text-stroke:0.3px #000;">,</span>
<span class="t" style="left:1140.9px;top:502.4px;font-size:24.9px;color:#000;font-family:'NanumGothic','Liberation Sans',sans-serif;-webkit-text-stroke:0.4px #000;letter-spacing:0.96px;transform:scaleX(0.940);">97</span>
<span class="t" style="left:116.5px;top:536.4px;font-size:24.9px;color:#217346;font-family:'NanumGothic','Liberation Sans',sans-serif;-webkit-text-stroke:0.5px #217346;letter-spacing:0.96px;transform:scaleX(0.940);">30</span>
<span class="t" style="left:46.7px;top:533.9px;font-size:21.2px;color:#333;transform:scaleX(0.964);">+</span>
<span class="t" style="left:163.0px;top:536.4px;font-size:24.9px;color:#000;font-family:'NanumGothic','Liberation Sans',sans-serif;font-weight:700;-webkit-text-stroke:0.4px #000;letter-spacing:1.88px;transform:scaleX(0.940);">2013</span>
<span class="t" style="left:227.8px;top:535.6px;font-size:24.9px;color:#000;font-family:'NanumGothic','Liberation Sans',sans-serif;-webkit-text-stroke:0.45px #000;transform:scaleX(1.360);">/</span>
<span class="t" style="left:242.8px;top:536.4px;font-size:24.9px;color:#000;font-family:'NanumGothic','Liberation Sans',sans-serif;font-weight:700;-webkit-text-stroke:0.4px #000;letter-spacing:1.88px;transform:scaleX(0.940);">10</span>
<span class="t" style="left:275.7px;top:535.6px;font-size:24.9px;color:#000;font-family:'NanumGothic','Liberation Sans',sans-serif;-webkit-text-stroke:0.45px #000;transform:scaleX(1.360);">/</span>
<span class="t" style="left:290.7px;top:536.4px;font-size:24.9px;color:#000;font-family:'NanumGothic','Liberation Sans',sans-serif;font-weight:700;-webkit-text-stroke:0.4px #000;letter-spacing:1.88px;transform:scaleX(0.940);">3</span>
<span class="t" style="left:317.5px;top:533.0px;font-size:29.33px;color:#000;font-family:'IPAGothic','Noto Sans CJK JP',monospace;font-weight:700;transform:scaleX(0.991);">集計</span>
<span class="t" style="left:1176.5px;top:536.4px;font-size:24.9px;color:#000;font-family:'NanumGothic','Liberation Sans',sans-serif;-webkit-text-stroke:0.4px #000;letter-spacing:0.96px;transform:scaleX(0.940);">500</span>
<span class="t" style="left:1168.9px;top:535.1px;font-size:24.9px;color:#000;font-family:'NanumGothic','Liberation Sans',sans-serif;-webkit-text-stroke:0.3px #000;">,</span>
<span class="t" style="left:1125.8px;top:536.4px;font-size:24.9px;color:#000;font-family:'NanumGothic','Liberation Sans',sans-serif;-webkit-text-stroke:0.4px #000;letter-spacing:0.96px;transform:scaleX(0.940);">339</span>
<span class="t" style="left:118.9px;top:570.4px;font-size:24.9px;color:#217346;font-family:'NanumGothic','Liberation Sans',sans-serif;-webkit-text-stroke:0.5px #217346;letter-spacing:0.96px;transform:scaleX(0.940);">41</span>
<span class="t" style="left:46.7px;top:567.9px;font-size:21.2px;color:#333;transform:scaleX(0.964);">+</span>
<span class="t" style="left:163.0px;top:570.4px;font-size:24.9px;color:#000;font-family:'NanumGothic','Liberation Sans',sans-serif;font-weight:700;-webkit-text-stroke:0.4px #000;letter-spacing:1.88px;transform:scaleX(0.940);">2013</span>
<span class="t" style="left:227.8px;top:569.6px;font-size:24.9px;color:#000;font-family:'NanumGothic','Liberation Sans',sans-serif;-webkit-text-stroke:0.45px #000;transform:scaleX(1.360);">/</span>
<span class="t" style="left:242.8px;top:570.4px;font-size:24.9px;color:#000;font-family:'NanumGothic','Liberation Sans',sans-serif;font-weight:700;-webkit-text-stroke:0.4px #000;letter-spacing:1.88px;transform:scaleX(0.940);">10</span>
<span class="t" style="left:275.7px;top:569.6px;font-size:24.9px;color:#000;font-family:'NanumGothic','Liberation Sans',sans-serif;-webkit-text-stroke:0.45px #000;transform:scaleX(1.360);">/</span>
<span class="t" style="left:290.7px;top:570.4px;font-size:24.9px;color:#000;font-family:'NanumGothic','Liberation Sans',sans-serif;font-weight:700;-webkit-text-stroke:0.4px #000;letter-spacing:1.88px;transform:scaleX(0.940);">4</span>
<span class="t" style="left:317.5px;top:567.0px;font-size:29.33px;color:#000;font-family:'IPAGothic','Noto Sans CJK JP',monospace;font-weight:700;transform:scaleX(0.991);">集計</span>
<span class="t" style="left:1176.5px;top:570.4px;font-size:24.9px;color:#000;font-family:'NanumGothic','Liberation Sans',sans-serif;-webkit-text-stroke:0.4px #000;letter-spacing:0.96px;transform:scaleX(0.940);">060</span>
<span class="t" style="left:1168.9px;top:569.1px;font-size:24.9px;color:#000;font-family:'NanumGothic','Liberation Sans',sans-serif;-webkit-text-stroke:0.3px #000;">,</span>
<span class="t" style="left:1125.8px;top:570.4px;font-size:24.9px;color:#000;font-family:'NanumGothic','Liberation Sans',sans-serif;-webkit-text-stroke:0.4px #000;letter-spacing:0.96px;transform:scaleX(0.940);">471</span>
<span class="t" style="left:116.5px;top:604.4px;font-size:24.9px;color:#217346;font-family:'NanumGothic','Liberation Sans',sans-serif;-webkit-text-stroke:0.5px #217346;letter-spacing:0.96px;transform:scaleX(0.940);">52</span>
<span class="t" style="left:46.7px;top:601.9px;font-size:21.2px;color:#333;transform:scaleX(0.964);">+</span>
<span class="t" style="left:163.0px;top:604.4px;font-size:24.9px;color:#000;font-family:'NanumGothic','Liberation Sans',sans-serif;font-weight:700;-webkit-text-stroke:0.4px #000;letter-spacing:1.88px;transform:scaleX(0.940);">2013</span>
<span class="t" style="left:227.8px;top:603.6px;font-size:24.9px;color:#000;font-family:'NanumGothic','Liberation Sans',sans-serif;-webkit-text-stroke:0.45px #000;transform:scaleX(1.360);">/</span>
<span class="t" style="left:242.8px;top:604.4px;font-size:24.9px;color:#000;font-family:'NanumGothic','Liberation Sans',sans-serif;font-weight:700;-webkit-text-stroke:0.4px #000;letter-spacing:1.88px;transform:scaleX(0.940);">10</span>
<span class="t" style="left:275.7px;top:603.6px;font-size:24.9px;color:#000;font-family:'NanumGothic','Liberation Sans',sans-serif;-webkit-text-stroke:0.45px #000;transform:scaleX(1.360);">/</span>
<span class="t" style="left:290.7px;top:604.4px;font-size:24.9px;color:#000;font-family:'NanumGothic','Liberation Sans',sans-serif;font-weight:700;-webkit-text-stroke:0.4px #000;letter-spacing:1.88px;transform:scaleX(0.940);">5</span>
<span class="t" style="left:317.5px;top:601.0px;font-size:29.33px;color:#000;font-family:'IPAGothic','Noto Sans CJK JP',monospace;font-weight:700;transform:scaleX(0.991);">集計</span>
<span class="t" style="left:1176.5px;top:604.4px;font-size:24.9px;color:#000;font-family:'NanumGothic','Liberation Sans',sans-serif;-webkit-text-stroke:0.4px #000;letter-spacing:0.96px;transform:scaleX(0.940);">200</span>
<span class="t" style="left:1168.9px;top:603.1px;font-size:24.9px;color:#000;font-family:'NanumGothic','Liberation Sans',sans-serif;-webkit-text-stroke:0.3px #000;">,</span>
<span class="t" style="left:1125.8px;top:604.4px;font-size:24.9px;color:#000;font-family:'NanumGothic','Liberation Sans',sans-serif;-webkit-text-stroke:0.4px #000;letter-spacing:0.96px;transform:scaleX(0.940);">282</span>
<span class="t" style="left:117.0px;top:638.4px;font-size:24.9px;color:#217346;font-family:'NanumGothic','Liberation Sans',sans-serif;-webkit-text-stroke:0.5px #217346;letter-spacing:0.96px;transform:scaleX(0.940);">63</span>
<span class="t" style="left:46.7px;top:635.9px;font-size:21.2px;color:#333;transform:scaleX(0.964);">+</span>
<span class="t" style="left:163.0px;top:638.4px;font-size:24.9px;color:#000;font-family:'NanumGothic','Liberation Sans',sans-serif;font-weight:700;-webkit-text-stroke:0.4px #000;letter-spacing:1.88px;transform:scaleX(0.940);">2013</span>
<span class="t" style="left:227.8px;top:637.6px;font-size:24.9px;color:#000;font-family:'NanumGothic','Liberation Sans',sans-serif;-webkit-text-stroke:0.45px #000;transform:scaleX(1.360);">/</span>
<span class="t" style="left:242.8px;top:638.4px;font-size:24.9px;color:#000;font-family:'NanumGothic','Liberation Sans',sans-serif;font-weight:700;-webkit-text-stroke:0.4px #000;letter-spacing:1.88px;transform:scaleX(0.940);">10</span>
<span class="t" style="left:275.7px;top:637.6px;font-size:24.9px;color:#000;font-family:'NanumGothic','Liberation Sans',sans-serif;-webkit-text-stroke:0.45px #000;transform:scaleX(1.360);">/</span>
<span class="t" style="left:290.7px;top:638.4px;font-size:24.9px;color:#000;font-family:'NanumGothic','Liberation Sans',sans-serif;font-weight:700;-webkit-text-stroke:0.4px #000;letter-spacing:1.88px;transform:scaleX(0.940);">6</span>
<span class="t" style="left:317.5px;top:635.0px;font-size:29.33px;color:#000;font-family:'IPAGothic','Noto Sans CJK JP',monospace;font-weight:700;transform:scaleX(0.991);">集計</span>
<span class="t" style="left:1176.5px;top:638.4px;font-size:24.9px;color:#000;font-family:'NanumGothic','Liberation Sans',sans-serif;-webkit-text-stroke:0.4px #000;letter-spacing:0.96px;transform:scaleX(0.940);">500</span>
<span class="t" style="left:1168.9px;top:637.1px;font-size:24.9px;color:#000;font-family:'NanumGothic','Liberation Sans',sans-serif;-webkit-text-stroke:0.3px #000;">,</span>
<span class="t" style="left:1125.8px;top:638.4px;font-size:24.9px;color:#000;font-family:'NanumGothic','Liberation Sans',sans-serif;-webkit-text-stroke:0.4px #000;letter-spacing:0.96px;transform:scaleX(0.940);">299</span>
<span class="t" style="left:117.0px;top:672.4px;font-size:24.9px;color:#217346;font-family:'NanumGothic','Liberation Sans',sans-serif;-webkit-text-stroke:0.5px #217346;letter-spacing:0.96px;transform:scaleX(0.940);">72</span>
<span class="t" style="left:46.7px;top:669.9px;font-size:21.2px;color:#333;transform:scaleX(0.964);">+</span>
<span class="t" style="left:163.0px;top:672.4px;font-size:24.9px;color:#000;font-family:'NanumGothic','Liberation Sans',sans-serif;font-weight:700;-webkit-text-stroke:0.4px #000;letter-spacing:1.88px;transform:scaleX(0.940);">2013</span>
<span class="t" style="left:227.8px;top:671.6px;font-size:24.9px;color:#000;font-family:'NanumGothic','Liberation Sans',sans-serif;-webkit-text-stroke:0.45px #000;transform:scaleX(1.360);">/</span>
<span class="t" style="left:242.8px;top:672.4px;font-size:24.9px;color:#000;font-family:'NanumGothic','Liberation Sans',sans-serif;font-weight:700;-webkit-text-stroke:0.4px #000;letter-spacing:1.88px;transform:scaleX(0.940);">10</span>
<span class="t" style="left:275.7px;top:671.6px;font-size:24.9px;color:#000;font-family:'NanumGothic','Liberation Sans',sans-serif;-webkit-text-stroke:0.45px #000;transform:scaleX(1.360);">/</span>
<span class="t" style="left:290.7px;top:672.4px;font-size:24.9px;color:#000;font-family:'NanumGothic','Liberation Sans',sans-serif;font-weight:700;-webkit-text-stroke:0.4px #000;letter-spacing:1.88px;transform:scaleX(0.940);">7</span>
<span class="t" style="left:317.5px;top:669.0px;font-size:29.33px;color:#000;font-family:'IPAGothic','Noto Sans CJK JP',monospace;font-weight:700;transform:scaleX(0.991);">集計</span>
<span class="t" style="left:1176.5px;top:672.4px;font-size:24.9px;color:#000;font-family:'NanumGothic','Liberation Sans',sans-serif;-webkit-text-stroke:0.4px #000;letter-spacing:0.96px;transform:scaleX(0.940);">200</span>
<span class="t" style="left:1168.9px;top:671.1px;font-size:24.9px;color:#000;font-family:'NanumGothic','Liberation Sans',sans-serif;-webkit-text-stroke:0.3px #000;">,</span>
<span class="t" style="left:1125.8px;top:672.4px;font-size:24.9px;color:#000;font-family:'NanumGothic','Liberation Sans',sans-serif;-webkit-text-stroke:0.4px #000;letter-spacing:0.96px;transform:scaleX(0.940);">141</span>
<span class="t" style="left:117.0px;top:706.4px;font-size:24.9px;color:#217346;font-family:'NanumGothic','Liberation Sans',sans-serif;-webkit-text-stroke:0.5px #217346;letter-spacing:0.96px;transform:scaleX(0.940);">83</span>
<span class="t" style="left:46.7px;top:703.9px;font-size:21.2px;color:#333;transform:scaleX(0.964);">+</span>
<span class="t" style="left:163.0px;top:706.4px;font-size:24.9px;color:#000;font-family:'NanumGothic','Liberation Sans',sans-serif;font-weight:700;-webkit-text-stroke:0.4px #000;letter-spacing:1.88px;transform:scaleX(0.940);">2013</span>
<span class="t" style="left:227.8px;top:705.6px;font-size:24.9px;color:#000;font-family:'NanumGothic','Liberation Sans',sans-serif;-webkit-text-stroke:0.45px #000;transform:scaleX(1.360);">/</span>
<span class="t" style="left:242.8px;top:706.4px;font-size:24.9px;color:#000;font-family:'NanumGothic','Liberation Sans',sans-serif;font-weight:700;-webkit-text-stroke:0.4px #000;letter-spacing:1.88px;transform:scaleX(0.940);">10</span>
<span class="t" style="left:275.7px;top:705.6px;font-size:24.9px;color:#000;font-family:'NanumGothic','Liberation Sans',sans-serif;-webkit-text-stroke:0.45px #000;transform:scaleX(1.360);">/</span>
<span class="t" style="left:290.7px;top:706.4px;font-size:24.9px;color:#000;font-family:'NanumGothic','Liberation Sans',sans-serif;font-weight:700;-webkit-text-stroke:0.4px #000;letter-spacing:1.88px;transform:scaleX(0.940);">8</span>
<span class="t" style="left:317.5px;top:703.0px;font-size:29.33px;color:#000;font-family:'IPAGothic','Noto Sans CJK JP',monospace;font-weight:700;transform:scaleX(0.991);">集計</span>
<span class="t" style="left:1176.5px;top:706.4px;font-size:24.9px;color:#000;font-family:'NanumGothic','Liberation Sans',sans-serif;-webkit-text-stroke:0.4px #000;letter-spacing:0.96px;transform:scaleX(0.940);">940</span>
<span class="t" style="left:1168.9px;top:705.1px;font-size:24.9px;color:#000;font-family:'NanumGothic','Liberation Sans',sans-serif;-webkit-text-stroke:0.3px #000;">,</span>
<span class="t" style="left:1125.8px;top:706.4px;font-size:24.9px;color:#000;font-family:'NanumGothic','Liberation Sans',sans-serif;-webkit-text-stroke:0.4px #000;letter-spacing:0.96px;transform:scaleX(0.940);">207</span>
<span class="t" style="left:116.5px;top:740.4px;font-size:24.9px;color:#217346;font-family:'NanumGothic','Liberation Sans',sans-serif;-webkit-text-stroke:0.5px #217346;letter-spacing:0.96px;transform:scaleX(0.940);">95</span>
<span class="t" style="left:46.7px;top:737.9px;font-size:21.2px;color:#333;transform:scaleX(0.964);">+</span>
<span class="t" style="left:163.0px;top:740.4px;font-size:24.9px;color:#000;font-family:'NanumGothic','Liberation Sans',sans-serif;font-weight:700;-webkit-text-stroke:0.4px #000;letter-spacing:1.88px;transform:scaleX(0.940);">2013</span>
<span class="t" style="left:227.8px;top:739.6px;font-size:24.9px;color:#000;font-family:'NanumGothic','Liberation Sans',sans-serif;-webkit-text-stroke:0.45px #000;transform:scaleX(1.360);">/</span>
<span class="t" style="left:242.8px;top:740.4px;font-size:24.9px;color:#000;font-family:'NanumGothic','Liberation Sans',sans-serif;font-weight:700;-webkit-text-stroke:0.4px #000;letter-spacing:1.88px;transform:scaleX(0.940);">10</span>
<span class="t" style="left:275.7px;top:739.6px;font-size:24.9px;color:#000;font-family:'NanumGothic','Liberation Sans',sans-serif;-webkit-text-stroke:0.45px #000;transform:scaleX(1.360);">/</span>
<span class="t" style="left:290.7px;top:740.4px;font-size:24.9px;color:#000;font-family:'NanumGothic','Liberation Sans',sans-serif;font-weight:700;-webkit-text-stroke:0.4px #000;letter-spacing:1.88px;transform:scaleX(0.940);">9</span>
<span class="t" style="left:317.5px;top:737.0px;font-size:29.33px;color:#000;font-family:'IPAGothic','Noto Sans CJK JP',monospace;font-weight:700;transform:scaleX(0.991);">集計</span>
<span class="t" style="left:1176.5px;top:740.4px;font-size:24.9px;color:#000;font-family:'NanumGothic','Liberation Sans',sans-serif;-webkit-text-stroke:0.4px #000;letter-spacing:0.96px;transform:scaleX(0.940);">300</span>
<span class="t" style="left:1168.9px;top:739.1px;font-size:24.9px;color:#000;font-family:'NanumGothic','Liberation Sans',sans-serif;-webkit-text-stroke:0.3px #000;">,</span>
<span class="t" style="left:1125.8px;top:740.4px;font-size:24.9px;color:#000;font-family:'NanumGothic','Liberation Sans',sans-serif;-webkit-text-stroke:0.4px #000;letter-spacing:0.96px;transform:scaleX(0.940);">116</span>
<span class="t" style="left:107.6px;top:774.4px;font-size:24.9px;color:#217346;font-family:'NanumGothic','Liberation Sans',sans-serif;-webkit-text-stroke:0.5px #217346;letter-spacing:0.96px;transform:scaleX(0.940);">104</span>
<span class="t" style="left:46.7px;top:771.9px;font-size:21.2px;color:#333;transform:scaleX(0.964);">+</span>
<span class="t" style="left:163.0px;top:774.4px;font-size:24.9px;color:#000;font-family:'NanumGothic','Liberation Sans',sans-serif;font-weight:700;-webkit-text-stroke:0.4px #000;letter-spacing:1.88px;transform:scaleX(0.940);">2013</span>
<span class="t" style="left:227.8px;top:773.6px;font-size:24.9px;color:#000;font-family:'NanumGothic','Liberation Sans',sans-serif;-webkit-text-stroke:0.45px #000;transform:scaleX(1.360);">/</span>
<span class="t" style="left:242.8px;top:774.4px;font-size:24.9px;color:#000;font-family:'NanumGothic','Liberation Sans',sans-serif;font-weight:700;-webkit-text-stroke:0.4px #000;letter-spacing:1.88px;transform:scaleX(0.940);">10</span>
<span class="t" style="left:275.7px;top:773.6px;font-size:24.9px;color:#000;font-family:'NanumGothic','Liberation Sans',sans-serif;-webkit-text-stroke:0.45px #000;transform:scaleX(1.360);">/</span>
<span class="t" style="left:290.7px;top:774.4px;font-size:24.9px;color:#000;font-family:'NanumGothic','Liberation Sans',sans-serif;font-weight:700;-webkit-text-stroke:0.4px #000;letter-spacing:1.88px;transform:scaleX(0.940);">10</span>
<span class="t" style="left:333.5px;top:771.0px;font-size:29.33px;color:#000;font-family:'IPAGothic','Noto Sans CJK JP',monospace;font-weight:700;transform:scaleX(0.991);">集計</span>
<span class="t" style="left:1176.5px;top:774.4px;font-size:24.9px;color:#000;font-family:'NanumGothic','Liberation Sans',sans-serif;-webkit-text-stroke:0.4px #000;letter-spacing:0.96px;transform:scaleX(0.940);">200</span>
<span class="t" style="left:1168.9px;top:773.1px;font-size:24.9px;color:#000;font-family:'NanumGothic','Liberation Sans',sans-serif;-webkit-text-stroke:0.3px #000;">,</span>
<span class="t" style="left:1125.8px;top:774.4px;font-size:24.9px;color:#000;font-family:'NanumGothic','Liberation Sans',sans-serif;-webkit-text-stroke:0.4px #000;letter-spacing:0.96px;transform:scaleX(0.940);">301</span>
<span class="t" style="left:108.1px;top:808.4px;font-size:24.9px;color:#217346;font-family:'NanumGothic','Liberation Sans',sans-serif;-webkit-text-stroke:0.5px #217346;letter-spacing:0.96px;transform:scaleX(0.940);">115</span>
<span class="t" style="left:46.7px;top:805.9px;font-size:21.2px;color:#333;transform:scaleX(0.964);">+</span>
<span class="t" style="left:163.0px;top:808.4px;font-size:24.9px;color:#000;font-family:'NanumGothic','Liberation Sans',sans-serif;font-weight:700;-webkit-text-stroke:0.4px #000;letter-spacing:1.88px;transform:scaleX(0.940);">2013</span>
<span class="t" style="left:227.8px;top:807.6px;font-size:24.9px;color:#000;font-family:'NanumGothic','Liberation Sans',sans-serif;-webkit-text-stroke:0.45px #000;transform:scaleX(1.360);">/</span>
<span class="t" style="left:242.8px;top:808.4px;font-size:24.9px;color:#000;font-family:'NanumGothic','Liberation Sans',sans-serif;font-weight:700;-webkit-text-stroke:0.4px #000;letter-spacing:1.88px;transform:scaleX(0.940);">10</span>
<span class="t" style="left:275.7px;top:807.6px;font-size:24.9px;color:#000;font-family:'NanumGothic','Liberation Sans',sans-serif;-webkit-text-stroke:0.45px #000;transform:scaleX(1.360);">/</span>
<span class="t" style="left:290.7px;top:808.4px;font-size:24.9px;color:#000;font-family:'NanumGothic','Liberation Sans',sans-serif;font-weight:700;-webkit-text-stroke:0.4px #000;letter-spacing:1.88px;transform:scaleX(0.940);">11</span>
<span class="t" style="left:333.5px;top:805.0px;font-size:29.33px;color:#000;font-family:'IPAGothic','Noto Sans CJK JP',monospace;font-weight:700;transform:scaleX(0.991);">集計</span>
<span class="t" style="left:1176.5px;top:808.4px;font-size:24.9px;color:#000;font-family:'NanumGothic','Liberation Sans',sans-serif;-webkit-text-stroke:0.4px #000;letter-spacing:0.96px;transform:scaleX(0.940);">620</span>
<span class="t" style="left:1168.9px;top:807.1px;font-size:24.9px;color:#000;font-family:'NanumGothic','Liberation Sans',sans-serif;-webkit-text-stroke:0.3px #000;">,</span>
<span class="t" style="left:1125.8px;top:808.4px;font-size:24.9px;color:#000;font-family:'NanumGothic','Liberation Sans',sans-serif;-webkit-text-stroke:0.4px #000;letter-spacing:0.96px;transform:scaleX(0.940);">159</span>
<span class="t" style="left:108.1px;top:842.4px;font-size:24.9px;color:#217346;font-family:'NanumGothic','Liberation Sans',sans-serif;-webkit-text-stroke:0.5px #217346;letter-spacing:0.96px;transform:scaleX(0.940);">127</span>
<span class="t" style="left:46.7px;top:839.9px;font-size:21.2px;color:#333;transform:scaleX(0.964);">+</span>
<span class="t" style="left:163.0px;top:842.4px;font-size:24.9px;color:#000;font-family:'NanumGothic','Liberation Sans',sans-serif;font-weight:700;-webkit-text-stroke:0.4px #000;letter-spacing:1.88px;transform:scaleX(0.940);">2013</span>
<span class="t" style="left:227.8px;top:841.6px;font-size:24.9px;color:#000;font-family:'NanumGothic','Liberation Sans',sans-serif;-webkit-text-stroke:0.45px #000;transform:scaleX(1.360);">/</span>
<span class="t" style="left:242.8px;top:842.4px;font-size:24.9px;color:#000;font-family:'NanumGothic','Liberation Sans',sans-serif;font-weight:700;-webkit-text-stroke:0.4px #000;letter-spacing:1.88px;transform:scaleX(0.940);">10</span>
<span class="t" style="left:275.7px;top:841.6px;font-size:24.9px;color:#000;font-family:'NanumGothic','Liberation Sans',sans-serif;-webkit-text-stroke:0.45px #000;transform:scaleX(1.360);">/</span>
<span class="t" style="left:290.7px;top:842.4px;font-size:24.9px;color:#000;font-family:'NanumGothic','Liberation Sans',sans-serif;font-weight:700;-webkit-text-stroke:0.4px #000;letter-spacing:1.88px;transform:scaleX(0.940);">12</span>
<span class="t" style="left:333.5px;top:839.0px;font-size:29.33px;color:#000;font-family:'IPAGothic','Noto Sans CJK JP',monospace;font-weight:700;transform:scaleX(0.991);">集計</span>
<span class="t" style="left:1176.5px;top:842.4px;font-size:24.9px;color:#000;font-family:'NanumGothic','Liberation Sans',sans-serif;-webkit-text-stroke:0.4px #000;letter-spacing:0.96px;transform:scaleX(0.940);">940</span>
<span class="t" style="left:1168.9px;top:841.1px;font-size:24.9px;color:#000;font-family:'NanumGothic','Liberation Sans',sans-serif;-webkit-text-stroke:0.3px #000;">,</span>
<span class="t" style="left:1125.8px;top:842.4px;font-size:24.9px;color:#000;font-family:'NanumGothic','Liberation Sans',sans-serif;-webkit-text-stroke:0.4px #000;letter-spacing:0.96px;transform:scaleX(0.940);">221</span>
<span class="t" style="left:108.1px;top:876.4px;font-size:24.9px;color:#217346;font-family:'NanumGothic','Liberation Sans',sans-serif;-webkit-text-stroke:0.5px #217346;letter-spacing:0.96px;transform:scaleX(0.940);">139</span>
<span class="t" style="left:46.7px;top:873.9px;font-size:21.2px;color:#333;transform:scaleX(0.964);">+</span>
<span class="t" style="left:163.0px;top:876.4px;font-size:24.9px;color:#000;font-family:'NanumGothic','Liberation Sans',sans-serif;font-weight:700;-webkit-text-stroke:0.4px #000;letter-spacing:1.88px;transform:scaleX(0.940);">2013</span>
<span class="t" style="left:227.8px;top:875.6px;font-size:24.9px;color:#000;font-family:'NanumGothic','Liberation Sans',sans-serif;-webkit-text-stroke:0.45px #000;transform:scaleX(1.360);">/</span>
<span class="t" style="left:242.8px;top:876.4px;font-size:24.9px;color:#000;font-family:'NanumGothic','Liberation Sans',sans-serif;font-weight:700;-webkit-text-stroke:0.4px #000;letter-spacing:1.88px;transform:scaleX(0.940);">10</span>
<span class="t" style="left:275.7px;top:875.6px;font-size:24.9px;color:#000;font-family:'NanumGothic','Liberation Sans',sans-serif;-webkit-text-stroke:0.45px #000;transform:scaleX(1.360);">/</span>
<span class="t" style="left:290.7px;top:876.4px;font-size:24.9px;color:#000;font-family:'NanumGothic','Liberation Sans',sans-serif;font-weight:700;-webkit-text-stroke:0.4px #000;letter-spacing:1.88px;transform:scaleX(0.940);">13</span>
<span class="t" style="left:333.5px;top:873.0px;font-size:29.33px;color:#000;font-family:'IPAGothic','Noto Sans CJK JP',monospace;font-weight:700;transform:scaleX(0.991);">集計</span>
<span class="t" style="left:1176.5px;top:876.4px;font-size:24.9px;color:#000;font-family:'NanumGothic','Liberation Sans',sans-serif;-webkit-text-stroke:0.4px #000;letter-spacing:0.96px;transform:scaleX(0.940);">420</span>
<span class="t" style="left:1168.9px;top:875.1px;font-size:24.9px;color:#000;font-family:'NanumGothic','Liberation Sans',sans-serif;-webkit-text-stroke:0.3px #000;">,</span>
<span class="t" style="left:1125.8px;top:876.4px;font-size:24.9px;color:#000;font-family:'NanumGothic','Liberation Sans',sans-serif;-webkit-text-stroke:0.4px #000;letter-spacing:0.96px;transform:scaleX(0.940);">214</span>
<span class="t" style="left:108.1px;top:910.4px;font-size:24.9px;color:#217346;font-family:'NanumGothic','Liberation Sans',sans-serif;-webkit-text-stroke:0.5px #217346;letter-spacing:0.96px;transform:scaleX(0.940);">150</span>
<span class="t" style="left:46.7px;top:907.9px;font-size:21.2px;color:#333;transform:scaleX(0.964);">+</span>
<span class="t" style="left:163.0px;top:910.4px;font-size:24.9px;color:#000;font-family:'NanumGothic','Liberation Sans',sans-serif;font-weight:700;-webkit-text-stroke:0.4px #000;letter-spacing:1.88px;transform:scaleX(0.940);">2013</span>
<span class="t" style="left:227.8px;top:909.6px;font-size:24.9px;color:#000;font-family:'NanumGothic','Liberation Sans',sans-serif;-webkit-text-stroke:0.45px #000;transform:scaleX(1.360);">/</span>
<span class="t" style="left:242.8px;top:910.4px;font-size:24.9px;color:#000;font-family:'NanumGothic','Liberation Sans',sans-serif;font-weight:700;-webkit-text-stroke:0.4px #000;letter-spacing:1.88px;transform:scaleX(0.940);">10</span>
<span class="t" style="left:275.7px;top:909.6px;font-size:24.9px;color:#000;font-family:'NanumGothic','Liberation Sans',sans-serif;-webkit-text-stroke:0.45px #000;transform:scaleX(1.360);">/</span>
<span class="t" style="left:290.7px;top:910.4px;font-size:24.9px;color:#000;font-family:'NanumGothic','Liberation Sans',sans-serif;font-weight:700;-webkit-text-stroke:0.4px #000;letter-spacing:1.88px;transform:scaleX(0.940);">14</span>
<span class="t" style="left:333.5px;top:907.0px;font-size:29.33px;color:#000;font-family:'IPAGothic','Noto Sans CJK JP',monospace;font-weight:700;transform:scaleX(0.991);">集計</span>
<span class="t" style="left:1176.5px;top:910.4px;font-size:24.9px;color:#000;font-family:'NanumGothic','Liberation Sans',sans-serif;-webkit-text-stroke:0.4px #000;letter-spacing:0.96px;transform:scaleX(0.940);">960</span>
<span class="t" style="left:1168.9px;top:909.1px;font-size:24.9px;color:#000;font-family:'NanumGothic','Liberation Sans',sans-serif;-webkit-text-stroke:0.3px #000;">,</span>
<span class="t" style="left:1125.8px;top:910.4px;font-size:24.9px;color:#000;font-family:'NanumGothic','Liberation Sans',sans-serif;-webkit-text-stroke:0.4px #000;letter-spacing:0.96px;transform:scaleX(0.940);">152</span>
<span class="t" style="left:108.1px;top:944.4px;font-size:24.9px;color:#217346;font-family:'NanumGothic','Liberation Sans',sans-serif;-webkit-text-stroke:0.5px #217346;letter-spacing:0.96px;transform:scaleX(0.940);">158</span>
<span class="t" style="left:46.7px;top:941.9px;font-size:21.2px;color:#333;transform:scaleX(0.964);">+</span>
<span class="t" style="left:163.0px;top:944.4px;font-size:24.9px;color:#000;font-family:'NanumGothic','Liberation Sans',sans-serif;font-weight:700;-webkit-text-stroke:0.4px #000;letter-spacing:1.88px;transform:scaleX(0.940);">2013</span>
<span class="t" style="left:227.8px;top:943.6px;font-size:24.9px;color:#000;font-family:'NanumGothic','Liberation Sans',sans-serif;-webkit-text-stroke:0.45px #000;transform:scaleX(1.360);">/</span>
<span class="t" style="left:242.8px;top:944.4px;font-size:24.9px;color:#000;font-family:'NanumGothic','Liberation Sans',sans-serif;font-weight:700;-webkit-text-stroke:0.4px #000;letter-spacing:1.88px;transform:scaleX(0.940);">10</span>
<span class="t" style="left:275.7px;top:943.6px;font-size:24.9px;color:#000;font-family:'NanumGothic','Liberation Sans',sans-serif;-webkit-text-stroke:0.45px #000;transform:scaleX(1.360);">/</span>
<span class="t" style="left:290.7px;top:944.4px;font-size:24.9px;color:#000;font-family:'NanumGothic','Liberation Sans',sans-serif;font-weight:700;-webkit-text-stroke:0.4px #000;letter-spacing:1.88px;transform:scaleX(0.940);">15</span>
<span class="t" style="left:333.5px;top:941.0px;font-size:29.33px;color:#000;font-family:'IPAGothic','Noto Sans CJK JP',monospace;font-weight:700;transform:scaleX(0.991);">集計</span>
<span class="t" style="left:1176.5px;top:944.4px;font-size:24.9px;color:#000;font-family:'NanumGothic','Liberation Sans',sans-serif;-webkit-text-stroke:0.4px #000;letter-spacing:0.96px;transform:scaleX(0.940);">900</span>
<span class="t" style="left:1168.9px;top:943.1px;font-size:24.9px;color:#000;font-family:'NanumGothic','Liberation Sans',sans-serif;-webkit-text-stroke:0.3px #000;">,</span>
<span class="t" style="left:1140.9px;top:944.4px;font-size:24.9px;color:#000;font-family:'NanumGothic','Liberation Sans',sans-serif;-webkit-text-stroke:0.4px #000;letter-spacing:0.96px;transform:scaleX(0.940);">41</span>
<span class="t" style="left:108.1px;top:978.4px;font-size:24.9px;color:#217346;font-family:'NanumGothic','Liberation Sans',sans-serif;-webkit-text-stroke:0.5px #217346;letter-spacing:0.96px;transform:scaleX(0.940);">168</span>
<span class="t" style="left:46.7px;top:975.9px;font-size:21.2px;color:#333;transform:scaleX(0.964);">+</span>
<span class="t" style="left:163.0px;top:978.4px;font-size:24.9px;color:#000;font-family:'NanumGothic','Liberation Sans',sans-serif;font-weight:700;-webkit-text-stroke:0.4px #000;letter-spacing:1.88px;transform:scaleX(0.940);">2013</span>
<span class="t" style="left:227.8px;top:977.6px;font-size:24.9px;color:#000;font-family:'NanumGothic','Liberation Sans',sans-serif;-webkit-text-stroke:0.45px #000;transform:scaleX(1.360);">/</span>
<span class="t" style="left:242.8px;top:978.4px;font-size:24.9px;color:#000;font-family:'NanumGothic','Liberation Sans',sans-serif;font-weight:700;-webkit-text-stroke:0.4px #000;letter-spacing:1.88px;transform:scaleX(0.940);">10</span>
<span class="t" style="left:275.7px;top:977.6px;font-size:24.9px;color:#000;font-family:'NanumGothic','Liberation Sans',sans-serif;-webkit-text-stroke:0.45px #000;transform:scaleX(1.360);">/</span>
<span class="t" style="left:290.7px;top:978.4px;font-size:24.9px;color:#000;font-family:'NanumGothic','Liberation Sans',sans-serif;font-weight:700;-webkit-text-stroke:0.4px #000;letter-spacing:1.88px;transform:scaleX(0.940);">16</span>
<span class="t" style="left:333.5px;top:975.0px;font-size:29.33px;color:#000;font-family:'IPAGothic','Noto Sans CJK JP',monospace;font-weight:700;transform:scaleX(0.991);">集計</span>
<span class="t" style="left:1176.5px;top:978.4px;font-size:24.9px;color:#000;font-family:'NanumGothic','Liberation Sans',sans-serif;-webkit-text-stroke:0.4px #000;letter-spacing:0.96px;transform:scaleX(0.940);">700</span>
<span class="t" style="left:1168.9px;top:977.1px;font-size:24.9px;color:#000;font-family:'NanumGothic','Liberation Sans',sans-serif;-webkit-text-stroke:0.3px #000;">,</span>
<span class="t" style="left:1140.9px;top:978.4px;font-size:24.9px;color:#000;font-family:'NanumGothic','Liberation Sans',sans-serif;-webkit-text-stroke:0.4px #000;letter-spacing:0.96px;transform:scaleX(0.940);">94</span>
<span class="t" style="left:108.1px;top:1012.4px;font-size:24.9px;color:#217346;font-family:'NanumGothic','Liberation Sans',sans-serif;-webkit-text-stroke:0.5px #217346;letter-spacing:0.96px;transform:scaleX(0.940);">180</span>
<span class="t" style="left:46.7px;top:1009.9px;font-size:21.2px;color:#333;transform:scaleX(0.964);">+</span>
<span class="t" style="left:163.0px;top:1012.4px;font-size:24.9px;color:#000;font-family:'NanumGothic','Liberation Sans',sans-serif;font-weight:700;-webkit-text-stroke:0.4px #000;letter-spacing:1.88px;transform:scaleX(0.940);">2013</span>
<span class="t" style="left:227.8px;top:1011.6px;font-size:24.9px;color:#000;font-family:'NanumGothic','Liberation Sans',sans-serif;-webkit-text-stroke:0.45px #000;transform:scaleX(1.360);">/</span>
<span class="t" style="left:242.8px;top:1012.4px;font-size:24.9px;color:#000;font-family:'NanumGothic','Liberation Sans',sans-serif;font-weight:700;-webkit-text-stroke:0.4px #000;letter-spacing:1.88px;transform:scaleX(0.940);">10</span>
<span class="t" style="left:275.7px;top:1011.6px;font-size:24.9px;color:#000;font-family:'NanumGothic','Liberation Sans',sans-serif;-webkit-text-stroke:0.45px #000;transform:scaleX(1.360);">/</span>
<span class="t" style="left:290.7px;top:1012.4px;font-size:24.9px;color:#000;font-family:'NanumGothic','Liberation Sans',sans-serif;font-weight:700;-webkit-text-stroke:0.4px #000;letter-spacing:1.88px;transform:scaleX(0.940);">17</span>
<span class="t" style="left:333.5px;top:1009.0px;font-size:29.33px;color:#000;font-family:'IPAGothic','Noto Sans CJK JP',monospace;font-weight:700;transform:scaleX(0.991);">集計</span>
<span class="t" style="left:1176.5px;top:1012.4px;font-size:24.9px;color:#000;font-family:'NanumGothic','Liberation Sans',sans-serif;-webkit-text-stroke:0.4px #000;letter-spacing:0.96px;transform:scaleX(0.940);">560</span>
<span class="t" style="left:1168.9px;top:1011.1px;font-size:24.9px;color:#000;font-family:'NanumGothic','Liberation Sans',sans-serif;-webkit-text-stroke:0.3px #000;">,</span>
<span class="t" style="left:1125.8px;top:1012.4px;font-size:24.9px;color:#000;font-family:'NanumGothic','Liberation Sans',sans-serif;-webkit-text-stroke:0.4px #000;letter-spacing:0.96px;transform:scaleX(0.940);">301</span>
<span class="t" style="left:109.9px;top:1046.4px;font-size:24.9px;color:#217346;font-family:'NanumGothic','Liberation Sans',sans-serif;-webkit-text-stroke:0.5px #217346;letter-spacing:0.96px;transform:scaleX(0.940);">191</span>
<span class="t" style="left:46.7px;top:1043.8px;font-size:21.2px;color:#333;transform:scaleX(0.964);">+</span>
<span class="t" style="left:163.0px;top:1046.4px;font-size:24.9px;color:#000;font-family:'NanumGothic','Liberation Sans',sans-serif;font-weight:700;-webkit-text-stroke:0.4px #000;letter-spacing:1.88px;transform:scaleX(0.940);">2013</span>
<span class="t" style="left:227.8px;top:1045.7px;font-size:24.9px;color:#000;font-family:'NanumGothic','Liberation Sans',sans-serif;-webkit-text-stroke:0.45px #000;transform:scaleX(1.360);">/</span>
<span class="t" style="left:242.8px;top:1046.4px;font-size:24.9px;color:#000;font-family:'NanumGothic','Liberation Sans',sans-serif;font-weight:700;-webkit-text-stroke:0.4px #000;letter-spacing:1.88px;transform:scaleX(0.940);">10</span>
<span class="t" style="left:275.7px;top:1045.7px;font-size:24.9px;color:#000;font-family:'NanumGothic','Liberation Sans',sans-serif;-webkit-text-stroke:0.45px #000;transform:scaleX(1.360);">/</span>
<span class="t" style="left:290.7px;top:1046.4px;font-size:24.9px;color:#000;font-family:'NanumGothic','Liberation Sans',sans-serif;font-weight:700;-webkit-text-stroke:0.4px #000;letter-spacing:1.88px;transform:scaleX(0.940);">18</span>
<span class="t" style="left:333.5px;top:1043.0px;font-size:29.33px;color:#000;font-family:'IPAGothic','Noto Sans CJK JP',monospace;font-weight:700;transform:scaleX(0.991);">集計</span>
<span class="t" style="left:1176.5px;top:1046.4px;font-size:24.9px;color:#000;font-family:'NanumGothic','Liberation Sans',sans-serif;-webkit-text-stroke:0.4px #000;letter-spacing:0.96px;transform:scaleX(0.940);">300</span>
<span class="t" style="left:1168.9px;top:1045.1px;font-size:24.9px;color:#000;font-family:'NanumGothic','Liberation Sans',sans-serif;-webkit-text-stroke:0.3px #000;">,</span>
<span class="t" style="left:1125.8px;top:1046.4px;font-size:24.9px;color:#000;font-family:'NanumGothic','Liberation Sans',sans-serif;-webkit-text-stroke:0.4px #000;letter-spacing:0.96px;transform:scaleX(0.940);">467</span>
<span class="t" style="left:109.5px;top:1080.4px;font-size:24.9px;color:#217346;font-family:'NanumGothic','Liberation Sans',sans-serif;-webkit-text-stroke:0.5px #217346;letter-spacing:0.96px;transform:scaleX(0.940);">203</span>
<span class="t" style="left:46.7px;top:1077.8px;font-size:21.2px;color:#333;transform:scaleX(0.964);">+</span>
<span class="t" style="left:163.0px;top:1080.4px;font-size:24.9px;color:#000;font-family:'NanumGothic','Liberation Sans',sans-serif;font-weight:700;-webkit-text-stroke:0.4px #000;letter-spacing:1.88px;transform:scaleX(0.940);">2013</span>
<span class="t" style="left:227.8px;top:1079.7px;font-size:24.9px;color:#000;font-family:'NanumGothic','Liberation Sans',sans-serif;-webkit-text-stroke:0.45px #000;transform:scaleX(1.360);">/</span>
<span class="t" style="left:242.8px;top:1080.4px;font-size:24.9px;color:#000;font-family:'NanumGothic','Liberation Sans',sans-serif;font-weight:700;-webkit-text-stroke:0.4px #000;letter-spacing:1.88px;transform:scaleX(0.940);">10</span>
<span class="t" style="left:275.7px;top:1079.7px;font-size:24.9px;color:#000;font-family:'NanumGothic','Liberation Sans',sans-serif;-webkit-text-stroke:0.45px #000;transform:scaleX(1.360);">/</span>
<span class="t" style="left:290.7px;top:1080.4px;font-size:24.9px;color:#000;font-family:'NanumGothic','Liberation Sans',sans-serif;font-weight:700;-webkit-text-stroke:0.4px #000;letter-spacing:1.88px;transform:scaleX(0.940);">19</span>
<span class="t" style="left:333.5px;top:1077.0px;font-size:29.33px;color:#000;font-family:'IPAGothic','Noto Sans CJK JP',monospace;font-weight:700;transform:scaleX(0.991);">集計</span>
<span class="t" style="left:1176.5px;top:1080.4px;font-size:24.9px;color:#000;font-family:'NanumGothic','Liberation Sans',sans-serif;-webkit-text-stroke:0.4px #000;letter-spacing:0.96px;transform:scaleX(0.940);">960</span>
<span class="t" style="left:1168.9px;top:1079.1px;font-size:24.9px;color:#000;font-family:'NanumGothic','Liberation Sans',sans-serif;-webkit-text-stroke:0.3px #000;">,</span>
<span class="t" style="left:1125.8px;top:1080.4px;font-size:24.9px;color:#000;font-family:'NanumGothic','Liberation Sans',sans-serif;-webkit-text-stroke:0.4px #000;letter-spacing:0.96px;transform:scaleX(0.940);">288</span>
</div>
<span class="t" style="left:40.9px;top:20.6px;font-size:24px;color:#5a9a78;transform:scaleX(1.016);">自動保存</span>
<span class="t" style="left:180.9px;top:23.2px;font-size:20px;color:#5a9a78;transform:scaleX(0.786);">オフ</span>
<span class="t" style="left:779.5px;top:21.2px;font-size:25px;color:#fff;transform:scaleX(1.106);">apinfo3 (1)</span>
<span class="t" style="left:926.6px;top:21.2px;font-size:25px;color:#fff;transform:scaleX(1.400);">-</span>
<span class="t" style="left:954.9px;top:21.6px;font-size:24px;color:#fff;transform:scaleX(0.887);">互換モード</span>
<span class="t" style="left:1072.5px;top:21.2px;font-size:25px;color:#fff;transform:scaleX(1.533);">-</span>
<span class="t" style="left:1099.8px;top:21.2px;font-size:25px;color:#fff;transform:scaleX(1.007);">Excel</span>
<span class="t" style="left:1515.6px;top:16.0px;font-size:24px;color:#fff;transform:scaleX(1.026);">新居雅行</span>
<span class="t" style="left:24.2px;top:82.9px;font-size:24px;color:#fff;transform:scaleX(0.712);">ファイル</span>
<span class="t" style="left:149.1px;top:83.9px;font-size:24px;color:#217346;transform:scaleX(0.871);">ホーム</span>
<span class="t" style="left:266.0px;top:83.9px;font-size:24px;color:#fff;transform:scaleX(1.017);">挿入</span>
<span class="t" style="left:369.2px;top:84.4px;font-size:24px;color:#fff;transform:scaleX(0.812);">ページ レイアウト</span>
<span class="t" style="left:582.5px;top:83.9px;font-size:24px;color:#fff;transform:scaleX(1.011);">数式</span>
<span class="t" style="left:684.8px;top:84.4px;font-size:24px;color:#fff;transform:scaleX(0.858);">データ</span>
<span class="t" style="left:799.5px;top:83.4px;font-size:24px;color:#fff;transform:scaleX(1.011);">校閲</span>
<span class="t" style="left:903.0px;top:84.4px;font-size:24px;color:#fff;transform:scaleX(1.033);">表示</span>
<span class="t" style="left:1006.2px;top:83.4px;font-size:24px;color:#fff;transform:scaleX(0.758);">アドイン</span>
<span class="t" style="left:1134.5px;top:83.5px;font-size:24px;color:#fff;transform:scaleX(0.978);">ACROBAT</span>
<span class="t" style="left:1300.3px;top:83.9px;font-size:24px;color:#fff;transform:scaleX(0.853);">チーム</span>
<span class="t" style="left:1437.1px;top:86.7px;font-size:24px;color:#d5e6dc;transform:scaleX(0.844);">実行したい作業を入力してください</span>
<span class="t" style="left:1886.1px;top:84.8px;font-size:24px;color:#fff;">共有</span>
<span class="t" style="left:9.1px;top:204.3px;font-size:24px;color:#444444;transform:scaleX(0.871);">貼り付け</span>
<span class="t" style="left:2.8px;top:269.4px;font-size:24px;color:#5a5a5a;transform:scaleX(0.735);">クリップボード</span>
<span class="t" style="left:169.2px;top:155.1px;font-size:24px;color:#444;transform:scaleX(1.018);">ＭＳ</span>
<span class="t" style="left:226.0px;top:155.1px;font-size:24px;color:#444;">Ｐ</span>
<span class="t" style="left:246.0px;top:155.4px;font-size:24px;color:#444;transform:scaleX(0.769);">ゴシック</span>
<span class="t" style="left:407.7px;top:154.6px;font-size:24px;color:#444;transform:scaleX(1.173);">11</span>
<span class="t" style="left:484.0px;top:154.1px;font-size:24px;color:#5a5a5a;">A</span>
<span class="t" style="left:524.7px;top:159.2px;font-size:18px;color:#5a5a5a;transform:scaleX(1.025);">A</span>
<span class="t" style="left:171.0px;top:204.0px;font-size:28px;color:#5a5a5a;font-weight:700;">B</span>
<span class="t" style="left:211.0px;top:203.5px;font-size:28px;color:#5a5a5a;font-family:'Liberation Serif','Noto Serif CJK SC',serif;font-weight:700;font-style:italic;transform:scaleX(1.308);">I</span>
<span class="t" style="left:245.8px;top:204.2px;font-size:28px;color:#5a5a5a;-webkit-text-stroke:0.6px #5a5a5a;transform:scaleX(1.100);">U</span>
<span class="t" style="left:436.7px;top:203.9px;font-size:28px;color:#555;-webkit-text-stroke:0.5px #555;transform:scaleX(1.032);">A</span>
<span class="t" style="left:506.2px;top:204.4px;font-size:13px;color:#444;transform:scaleX(1.130);">ア</span>
<span class="t" style="left:506.0px;top:219.5px;font-size:15px;color:#444;transform:scaleX(1.021);">亜</span>
<span class="t" style="left:305.3px;top:268.6px;font-size:24px;color:#5a5a5a;transform:scaleX(0.739);">フォント</span>
<span class="t" style="left:649.8px;top:269.6px;font-size:24px;color:#5a5a5a;">配置</span>
<span class="t" style="left:834.8px;top:154.6px;font-size:24px;color:#444;transform:scaleX(1.026);">通貨</span>
<span class="t" style="left:889.0px;top:204.9px;font-size:30px;color:#505050;transform:scaleX(1.016);">%</span>
<span class="t" style="left:933.8px;top:176.6px;font-size:52px;color:#5a5a5a;font-family:'Liberation Serif','Noto Serif CJK SC',serif;font-weight:700;transform:scaleX(1.170);">,</span>
<span class="t" style="left:988.8px;top:205.0px;font-size:16px;color:#555;transform:scaleX(1.167);">.0</span>
<span class="t" style="left:979.9px;top:220.4px;font-size:16px;color:#555;transform:scaleX(1.095);">.00</span>
<span class="t" style="left:1018.4px;top:205.0px;font-size:16px;color:#555;transform:scaleX(1.095);">.00</span>
<span class="t" style="left:1027.3px;top:220.4px;font-size:16px;color:#555;transform:scaleX(1.167);">.0</span>
<span class="t" style="left:898.7px;top:269.4px;font-size:24px;color:#5a5a5a;transform:scaleX(1.022);">数値</span>
<span class="t" style="left:1112.3px;top:170.8px;font-size:24px;color:#333;transform:scaleX(1.167);">≠</span>
<span class="t" style="left:1058.0px;top:201.0px;font-size:24px;color:#444444;transform:scaleX(0.971);">条件付き</span>
<span class="t" style="left:1070.7px;top:232.8px;font-size:24px;color:#444444;transform:scaleX(1.013);">書式</span>
<span class="t" style="left:1152.4px;top:202.0px;font-size:24px;color:#444444;transform:scaleX(0.783);">テーブルとして</span>
<span class="t" style="left:1160.7px;top:232.8px;font-size:24px;color:#444444;">書式設定</span>
<span class="t" style="left:1300.9px;top:201.5px;font-size:24px;color:#444444;transform:scaleX(0.845);">セルの</span>
<span class="t" style="left:1283.5px;top:232.8px;font-size:24px;color:#444444;transform:scaleX(0.771);">スタイル</span>
<span class="t" style="left:1179.4px;top:269.6px;font-size:24px;color:#5a5a5a;transform:scaleX(0.778);">スタイル</span>
<span class="t" style="left:1425.3px;top:136.5px;font-size:24px;color:#444444;transform:scaleX(1.022);">挿入</span>
<span class="t" style="left:1424.6px;top:175.7px;font-size:24px;color:#444444;transform:scaleX(1.036);">削除</span>
<span class="t" style="left:1425.7px;top:215.0px;font-size:24px;color:#444444;transform:scaleX(1.013);">書式</span>
<span class="t" style="left:1422.5px;top:269.9px;font-size:24px;color:#5a5a5a;transform:scaleX(0.835);">セル</span>
<span class="t" style="left:1512.6px;top:128.5px;font-size:38.43px;color:#5a5a5a;transform:scaleX(1.200);">Σ</span>
<span class="t" style="left:1590.8px;top:133.3px;font-size:30px;color:#4a7ebb;-webkit-text-stroke:0.6px #4a7ebb;transform:scaleX(0.985);">A</span>
<span class="t" style="left:1591.5px;top:161.5px;font-size:30px;color:#9b59b6;-webkit-text-stroke:0.6px #9b59b6;">Z</span>
<span class="t" style="left:1567.4px;top:201.5px;font-size:24px;color:#444444;transform:scaleX(0.877);">並べ替えと</span>
<span class="t" style="left:1564.5px;top:232.7px;font-size:24px;color:#444444;transform:scaleX(0.738);">フィルター</span>
<span class="t" style="left:1678.8px;top:201.5px;font-size:24px;color:#444444;transform:scaleX(0.919);">検索と</span>
<span class="t" style="left:1677.3px;top:232.8px;font-size:24px;color:#444444;transform:scaleX(1.009);">選択</span>
<span class="t" style="left:1603.0px;top:269.5px;font-size:24px;color:#5a5a5a;transform:scaleX(1.017);">編集</span>
<span class="t" style="left:17.2px;top:332.9px;font-size:29.31px;color:#505050;font-family:'NanumGothic','Liberation Sans',sans-serif;transform:scaleX(0.960);">H500</span>
<span class="t" style="left:440.8px;top:326.1px;font-size:33px;color:#5a5a5a;font-family:'Liberation Serif','Noto Serif CJK SC',serif;font-style:italic;-webkit-text-stroke:0.6px #5a5a5a;transform:scaleX(1.042);">fx</span>
<span class="t" style="left:520.0px;top:331.0px;font-size:28.5px;color:#505050;font-family:'NanumGothic','Liberation Sans',sans-serif;transform:scaleX(1.021);">=SUBTOTAL(9,H492:H499)</span>
<span class="t" style="left:15.5px;top:399.2px;font-size:16.5px;color:#444;font-family:'NanumGothic','Liberation Sans',sans-serif;">1</span>
<span class="t" style="left:47.6px;top:399.2px;font-size:16.5px;color:#444;font-family:'NanumGothic','Liberation Sans',sans-serif;">2</span>
<span class="t" style="left:80.9px;top:399.2px;font-size:16.5px;color:#444;font-family:'NanumGothic','Liberation Sans',sans-serif;">3</span>
<span class="t" style="left:225.5px;top:396.9px;font-size:26.4px;color:#217346;">A</span>
<span class="t" style="left:366.5px;top:396.9px;font-size:26.4px;color:#217346;">B</span>
<span class="t" style="left:481.0px;top:396.9px;font-size:26.4px;color:#217346;">C</span>
<span class="t" style="left:566.5px;top:396.9px;font-size:26.4px;color:#217346;">D</span>
<span class="t" style="left:724.0px;top:396.9px;font-size:26.4px;color:#217346;">E</span>
<span class="t" style="left:894.5px;top:396.9px;font-size:26.4px;color:#217346;">F</span>
<span class="t" style="left:997.5px;top:396.9px;font-size:26.4px;color:#217346;">G</span>
<span class="t" style="left:1135.5px;top:396.9px;font-size:26.4px;color:#217346;">H</span>
<span class="t" style="left:1287.2px;top:395.9px;font-size:28px;color:#000;font-family:'Liberation Serif','Noto Serif CJK SC',serif;font-weight:700;transform:scaleX(0.778);">I</span>
<span class="t" style="left:1390.0px;top:396.9px;font-size:26.4px;color:#000;">J</span>
<span class="t" style="left:1506.0px;top:396.9px;font-size:26.4px;color:#000;">K</span>
<span class="t" style="left:1668.5px;top:396.9px;font-size:26.4px;color:#000;">L</span>
<span class="t" style="left:1810.5px;top:396.9px;font-size:26.4px;color:#000;">M</span>
<span class="t" style="left:150.5px;top:1083.8px;font-size:27px;color:#217346;font-family:'IPAGothic','Noto Sans CJK JP',monospace;transform:scaleX(1.014);">集計処理</span>
<span class="t" style="left:5.1px;top:1133.0px;font-size:23.5px;color:#505050;transform:scaleX(0.891);">コピー先を選択し、Enter キーを押すか、貼り付けを選択します。</span>
<span class="t" style="left:809.5px;top:1130.9px;font-size:24px;color:#505050;transform:scaleX(1.106);">平均: 251,425</span>
<span class="t" style="left:987.1px;top:1131.4px;font-size:24px;color:#505050;transform:scaleX(0.945);">データの個数: 94</span>
<span class="t" style="left:1192.3px;top:1131.4px;font-size:24px;color:#505050;transform:scaleX(1.128);">合計: 11,816,980</span>
<span class="t" style="left:1841.0px;top:1131.5px;font-size:24px;color:#505050;transform:scaleX(1.124);">100%</span>
</div>
</body></html>
